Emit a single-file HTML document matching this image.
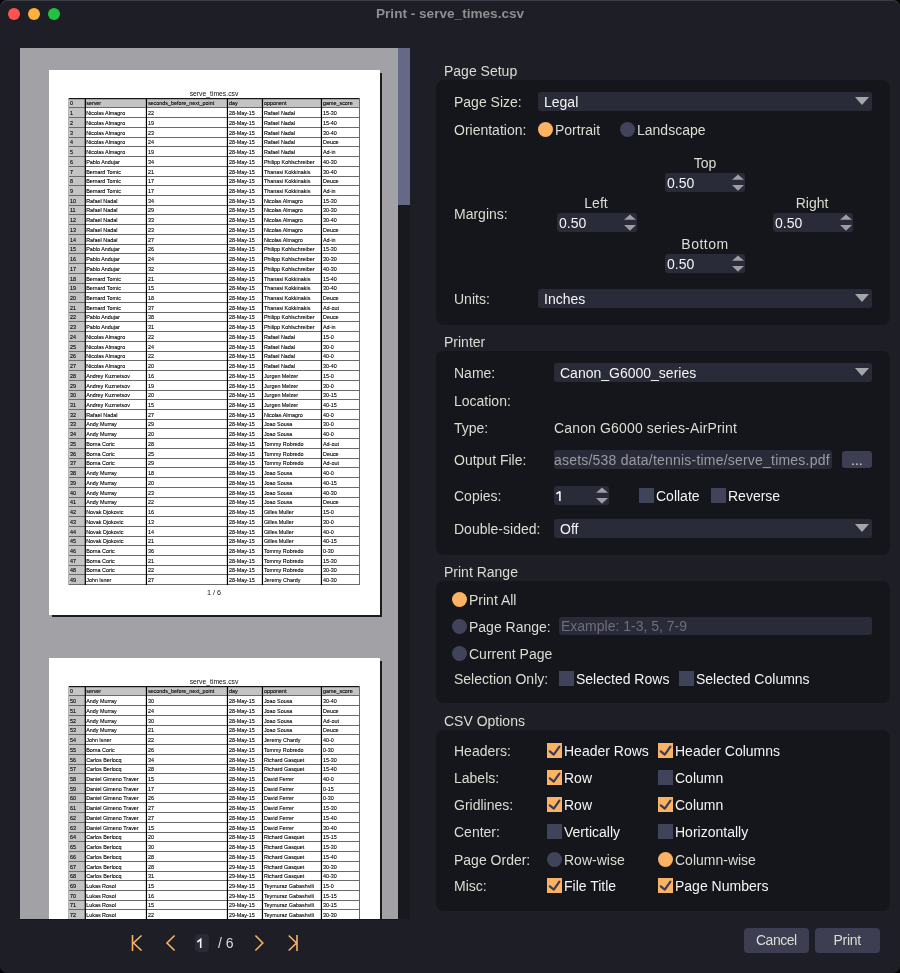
<!DOCTYPE html><html><head><meta charset="utf-8"><style>
html,body{margin:0;padding:0;width:900px;height:973px;background:#000;overflow:hidden}
.win{will-change:transform;position:absolute;left:0;top:0;width:900px;height:973px;background:#1d1e26;border-radius:7px;overflow:hidden;box-shadow:inset 0 1px 0 #3c3d44}
.t{position:absolute;white-space:nowrap;font-family:"Liberation Sans", sans-serif}
.r{position:absolute}
.win *{-webkit-font-smoothing:antialiased}
.pv{position:absolute;left:20px;top:48px;width:378px;height:871px;background:#a2a1a6;overflow:hidden}
</style></head><body><div class="win">
<div class="r" style="left:8px;top:8px;width:12px;height:12px;border-radius:50%;background:#fe5352"></div>
<div class="r" style="left:28px;top:8px;width:12px;height:12px;border-radius:50%;background:#fdb13a"></div>
<div class="r" style="left:48px;top:8px;width:12px;height:12px;border-radius:50%;background:#21c244"></div>
<div class="t" style="left:376px;top:7px;font-size:13.6px;line-height:13.6px;color:#8f8f92;font-weight:bold;">Print - serve_times.csv</div>
<div class="pv">
<div class="r" style="left:-20px;top:-48px;width:900px;height:973px">
<div class="r" style="left:52px;top:73px;width:330px;height:544px;background:#1c1c1c"></div>
<div class="r" style="left:49px;top:70px;width:331px;height:545px;background:#fff"></div>
<div class="t" style="left:49px;width:330px;text-align:center;top:89.5px;font-size:6.8px;line-height:7px;color:#111">serve_times.csv</div>
<svg class="r" style="left:0;top:0" width="900" height="973"><rect x="68" y="98" width="17.400000000000006" height="487" fill="#c4c4c4"/><rect x="68" y="98" width="292" height="9" fill="#c4c4c4"/><rect x="68" y="98" width="292" height="1.2" fill="#151515"/><rect x="68" y="107" width="292" height="1" fill="#6a6a6a"/><rect x="68" y="117" width="292" height="1" fill="#6a6a6a"/><rect x="68" y="127" width="292" height="1" fill="#6a6a6a"/><rect x="68" y="137" width="292" height="1" fill="#6a6a6a"/><rect x="68" y="146" width="292" height="1" fill="#6a6a6a"/><rect x="68" y="156" width="292" height="1" fill="#6a6a6a"/><rect x="68" y="166" width="292" height="1" fill="#6a6a6a"/><rect x="68" y="176" width="292" height="1" fill="#6a6a6a"/><rect x="68" y="185" width="292" height="1" fill="#6a6a6a"/><rect x="68" y="195" width="292" height="1" fill="#6a6a6a"/><rect x="68" y="205" width="292" height="1" fill="#6a6a6a"/><rect x="68" y="214" width="292" height="1" fill="#6a6a6a"/><rect x="68" y="224" width="292" height="1" fill="#6a6a6a"/><rect x="68" y="234" width="292" height="1" fill="#6a6a6a"/><rect x="68" y="244" width="292" height="1" fill="#6a6a6a"/><rect x="68" y="253" width="292" height="1" fill="#6a6a6a"/><rect x="68" y="263" width="292" height="1" fill="#6a6a6a"/><rect x="68" y="273" width="292" height="1" fill="#6a6a6a"/><rect x="68" y="283" width="292" height="1" fill="#6a6a6a"/><rect x="68" y="292" width="292" height="1" fill="#6a6a6a"/><rect x="68" y="302" width="292" height="1" fill="#6a6a6a"/><rect x="68" y="312" width="292" height="1" fill="#6a6a6a"/><rect x="68" y="321" width="292" height="1" fill="#6a6a6a"/><rect x="68" y="331" width="292" height="1" fill="#6a6a6a"/><rect x="68" y="341" width="292" height="1" fill="#6a6a6a"/><rect x="68" y="351" width="292" height="1" fill="#6a6a6a"/><rect x="68" y="360" width="292" height="1" fill="#6a6a6a"/><rect x="68" y="370" width="292" height="1" fill="#6a6a6a"/><rect x="68" y="380" width="292" height="1" fill="#6a6a6a"/><rect x="68" y="390" width="292" height="1" fill="#6a6a6a"/><rect x="68" y="399" width="292" height="1" fill="#6a6a6a"/><rect x="68" y="409" width="292" height="1" fill="#6a6a6a"/><rect x="68" y="419" width="292" height="1" fill="#6a6a6a"/><rect x="68" y="428" width="292" height="1" fill="#6a6a6a"/><rect x="68" y="438" width="292" height="1" fill="#6a6a6a"/><rect x="68" y="448" width="292" height="1" fill="#6a6a6a"/><rect x="68" y="458" width="292" height="1" fill="#6a6a6a"/><rect x="68" y="467" width="292" height="1" fill="#6a6a6a"/><rect x="68" y="477" width="292" height="1" fill="#6a6a6a"/><rect x="68" y="487" width="292" height="1" fill="#6a6a6a"/><rect x="68" y="497" width="292" height="1" fill="#6a6a6a"/><rect x="68" y="506" width="292" height="1" fill="#6a6a6a"/><rect x="68" y="516" width="292" height="1" fill="#6a6a6a"/><rect x="68" y="526" width="292" height="1" fill="#6a6a6a"/><rect x="68" y="536" width="292" height="1" fill="#6a6a6a"/><rect x="68" y="545" width="292" height="1" fill="#6a6a6a"/><rect x="68" y="555" width="292" height="1" fill="#6a6a6a"/><rect x="68" y="565" width="292" height="1" fill="#6a6a6a"/><rect x="68" y="574" width="292" height="1" fill="#6a6a6a"/><rect x="68" y="584" width="292" height="1" fill="#6a6a6a"/><rect x="68" y="98" width="1" height="487" fill="#b4b4b4"/><rect x="359" y="98" width="1" height="487" fill="#6a6a6a"/><rect x="84.70" y="98" width="1.2" height="487" fill="#000"/><rect x="145.84" y="98" width="1.2" height="487" fill="#000"/><rect x="226.84" y="98" width="1.2" height="487" fill="#000"/><rect x="261.84" y="98" width="1.2" height="487" fill="#000"/><rect x="320.84" y="98" width="1.2" height="487" fill="#000"/></svg>
<div class="t" style="left:70.00px;top:99.80px;font-size:5.4px;line-height:6px;color:#000;-webkit-text-stroke:0.1px #000">0</div>
<div class="t" style="left:86.20px;top:99.80px;font-size:5.4px;line-height:6px;color:#000;-webkit-text-stroke:0.1px #000">server</div>
<div class="t" style="left:147.90px;top:99.80px;font-size:5.4px;line-height:6px;color:#000;-webkit-text-stroke:0.1px #000">seconds_before_next_point</div>
<div class="t" style="left:228.90px;top:99.80px;font-size:5.4px;line-height:6px;color:#000;-webkit-text-stroke:0.1px #000">day</div>
<div class="t" style="left:263.90px;top:99.80px;font-size:5.4px;line-height:6px;color:#000;-webkit-text-stroke:0.1px #000">opponent</div>
<div class="t" style="left:323.00px;top:99.80px;font-size:5.4px;line-height:6px;color:#000;-webkit-text-stroke:0.1px #000">game_score</div>
<div class="t" style="left:70.00px;top:109.80px;font-size:5.4px;line-height:6px;color:#000;-webkit-text-stroke:0.1px #000">1</div>
<div class="t" style="left:86.20px;top:109.80px;font-size:5.4px;line-height:6px;color:#000;-webkit-text-stroke:0.1px #000">Nicolas Almagro</div>
<div class="t" style="left:147.90px;top:109.80px;font-size:5.4px;line-height:6px;color:#000;-webkit-text-stroke:0.1px #000">22</div>
<div class="t" style="left:228.90px;top:109.80px;font-size:5.4px;line-height:6px;color:#000;-webkit-text-stroke:0.1px #000">28-May-15</div>
<div class="t" style="left:263.90px;top:109.80px;font-size:5.4px;line-height:6px;color:#000;-webkit-text-stroke:0.1px #000">Rafael Nadal</div>
<div class="t" style="left:323.00px;top:109.80px;font-size:5.4px;line-height:6px;color:#000;-webkit-text-stroke:0.1px #000">15-30</div>
<div class="t" style="left:70.00px;top:119.80px;font-size:5.4px;line-height:6px;color:#000;-webkit-text-stroke:0.1px #000">2</div>
<div class="t" style="left:86.20px;top:119.80px;font-size:5.4px;line-height:6px;color:#000;-webkit-text-stroke:0.1px #000">Nicolas Almagro</div>
<div class="t" style="left:147.90px;top:119.80px;font-size:5.4px;line-height:6px;color:#000;-webkit-text-stroke:0.1px #000">19</div>
<div class="t" style="left:228.90px;top:119.80px;font-size:5.4px;line-height:6px;color:#000;-webkit-text-stroke:0.1px #000">28-May-15</div>
<div class="t" style="left:263.90px;top:119.80px;font-size:5.4px;line-height:6px;color:#000;-webkit-text-stroke:0.1px #000">Rafael Nadal</div>
<div class="t" style="left:323.00px;top:119.80px;font-size:5.4px;line-height:6px;color:#000;-webkit-text-stroke:0.1px #000">15-40</div>
<div class="t" style="left:70.00px;top:129.80px;font-size:5.4px;line-height:6px;color:#000;-webkit-text-stroke:0.1px #000">3</div>
<div class="t" style="left:86.20px;top:129.80px;font-size:5.4px;line-height:6px;color:#000;-webkit-text-stroke:0.1px #000">Nicolas Almagro</div>
<div class="t" style="left:147.90px;top:129.80px;font-size:5.4px;line-height:6px;color:#000;-webkit-text-stroke:0.1px #000">23</div>
<div class="t" style="left:228.90px;top:129.80px;font-size:5.4px;line-height:6px;color:#000;-webkit-text-stroke:0.1px #000">28-May-15</div>
<div class="t" style="left:263.90px;top:129.80px;font-size:5.4px;line-height:6px;color:#000;-webkit-text-stroke:0.1px #000">Rafael Nadal</div>
<div class="t" style="left:323.00px;top:129.80px;font-size:5.4px;line-height:6px;color:#000;-webkit-text-stroke:0.1px #000">30-40</div>
<div class="t" style="left:70.00px;top:138.80px;font-size:5.4px;line-height:6px;color:#000;-webkit-text-stroke:0.1px #000">4</div>
<div class="t" style="left:86.20px;top:138.80px;font-size:5.4px;line-height:6px;color:#000;-webkit-text-stroke:0.1px #000">Nicolas Almagro</div>
<div class="t" style="left:147.90px;top:138.80px;font-size:5.4px;line-height:6px;color:#000;-webkit-text-stroke:0.1px #000">24</div>
<div class="t" style="left:228.90px;top:138.80px;font-size:5.4px;line-height:6px;color:#000;-webkit-text-stroke:0.1px #000">28-May-15</div>
<div class="t" style="left:263.90px;top:138.80px;font-size:5.4px;line-height:6px;color:#000;-webkit-text-stroke:0.1px #000">Rafael Nadal</div>
<div class="t" style="left:323.00px;top:138.80px;font-size:5.4px;line-height:6px;color:#000;-webkit-text-stroke:0.1px #000">Deuce</div>
<div class="t" style="left:70.00px;top:148.80px;font-size:5.4px;line-height:6px;color:#000;-webkit-text-stroke:0.1px #000">5</div>
<div class="t" style="left:86.20px;top:148.80px;font-size:5.4px;line-height:6px;color:#000;-webkit-text-stroke:0.1px #000">Nicolas Almagro</div>
<div class="t" style="left:147.90px;top:148.80px;font-size:5.4px;line-height:6px;color:#000;-webkit-text-stroke:0.1px #000">19</div>
<div class="t" style="left:228.90px;top:148.80px;font-size:5.4px;line-height:6px;color:#000;-webkit-text-stroke:0.1px #000">28-May-15</div>
<div class="t" style="left:263.90px;top:148.80px;font-size:5.4px;line-height:6px;color:#000;-webkit-text-stroke:0.1px #000">Rafael Nadal</div>
<div class="t" style="left:323.00px;top:148.80px;font-size:5.4px;line-height:6px;color:#000;-webkit-text-stroke:0.1px #000">Ad-in</div>
<div class="t" style="left:70.00px;top:158.80px;font-size:5.4px;line-height:6px;color:#000;-webkit-text-stroke:0.1px #000">6</div>
<div class="t" style="left:86.20px;top:158.80px;font-size:5.4px;line-height:6px;color:#000;-webkit-text-stroke:0.1px #000">Pablo Andujar</div>
<div class="t" style="left:147.90px;top:158.80px;font-size:5.4px;line-height:6px;color:#000;-webkit-text-stroke:0.1px #000">34</div>
<div class="t" style="left:228.90px;top:158.80px;font-size:5.4px;line-height:6px;color:#000;-webkit-text-stroke:0.1px #000">28-May-15</div>
<div class="t" style="left:263.90px;top:158.80px;font-size:5.4px;line-height:6px;color:#000;-webkit-text-stroke:0.1px #000">Philipp Kohlschreiber</div>
<div class="t" style="left:323.00px;top:158.80px;font-size:5.4px;line-height:6px;color:#000;-webkit-text-stroke:0.1px #000">40-30</div>
<div class="t" style="left:70.00px;top:168.80px;font-size:5.4px;line-height:6px;color:#000;-webkit-text-stroke:0.1px #000">7</div>
<div class="t" style="left:86.20px;top:168.80px;font-size:5.4px;line-height:6px;color:#000;-webkit-text-stroke:0.1px #000">Bernard Tomic</div>
<div class="t" style="left:147.90px;top:168.80px;font-size:5.4px;line-height:6px;color:#000;-webkit-text-stroke:0.1px #000">21</div>
<div class="t" style="left:228.90px;top:168.80px;font-size:5.4px;line-height:6px;color:#000;-webkit-text-stroke:0.1px #000">28-May-15</div>
<div class="t" style="left:263.90px;top:168.80px;font-size:5.4px;line-height:6px;color:#000;-webkit-text-stroke:0.1px #000">Thanasi Kokkinakis</div>
<div class="t" style="left:323.00px;top:168.80px;font-size:5.4px;line-height:6px;color:#000;-webkit-text-stroke:0.1px #000">30-40</div>
<div class="t" style="left:70.00px;top:177.80px;font-size:5.4px;line-height:6px;color:#000;-webkit-text-stroke:0.1px #000">8</div>
<div class="t" style="left:86.20px;top:177.80px;font-size:5.4px;line-height:6px;color:#000;-webkit-text-stroke:0.1px #000">Bernard Tomic</div>
<div class="t" style="left:147.90px;top:177.80px;font-size:5.4px;line-height:6px;color:#000;-webkit-text-stroke:0.1px #000">17</div>
<div class="t" style="left:228.90px;top:177.80px;font-size:5.4px;line-height:6px;color:#000;-webkit-text-stroke:0.1px #000">28-May-15</div>
<div class="t" style="left:263.90px;top:177.80px;font-size:5.4px;line-height:6px;color:#000;-webkit-text-stroke:0.1px #000">Thanasi Kokkinakis</div>
<div class="t" style="left:323.00px;top:177.80px;font-size:5.4px;line-height:6px;color:#000;-webkit-text-stroke:0.1px #000">Deuce</div>
<div class="t" style="left:70.00px;top:187.80px;font-size:5.4px;line-height:6px;color:#000;-webkit-text-stroke:0.1px #000">9</div>
<div class="t" style="left:86.20px;top:187.80px;font-size:5.4px;line-height:6px;color:#000;-webkit-text-stroke:0.1px #000">Bernard Tomic</div>
<div class="t" style="left:147.90px;top:187.80px;font-size:5.4px;line-height:6px;color:#000;-webkit-text-stroke:0.1px #000">17</div>
<div class="t" style="left:228.90px;top:187.80px;font-size:5.4px;line-height:6px;color:#000;-webkit-text-stroke:0.1px #000">28-May-15</div>
<div class="t" style="left:263.90px;top:187.80px;font-size:5.4px;line-height:6px;color:#000;-webkit-text-stroke:0.1px #000">Thanasi Kokkinakis</div>
<div class="t" style="left:323.00px;top:187.80px;font-size:5.4px;line-height:6px;color:#000;-webkit-text-stroke:0.1px #000">Ad-in</div>
<div class="t" style="left:70.00px;top:197.80px;font-size:5.4px;line-height:6px;color:#000;-webkit-text-stroke:0.1px #000">10</div>
<div class="t" style="left:86.20px;top:197.80px;font-size:5.4px;line-height:6px;color:#000;-webkit-text-stroke:0.1px #000">Rafael Nadal</div>
<div class="t" style="left:147.90px;top:197.80px;font-size:5.4px;line-height:6px;color:#000;-webkit-text-stroke:0.1px #000">34</div>
<div class="t" style="left:228.90px;top:197.80px;font-size:5.4px;line-height:6px;color:#000;-webkit-text-stroke:0.1px #000">28-May-15</div>
<div class="t" style="left:263.90px;top:197.80px;font-size:5.4px;line-height:6px;color:#000;-webkit-text-stroke:0.1px #000">Nicolas Almagro</div>
<div class="t" style="left:323.00px;top:197.80px;font-size:5.4px;line-height:6px;color:#000;-webkit-text-stroke:0.1px #000">15-30</div>
<div class="t" style="left:70.00px;top:206.80px;font-size:5.4px;line-height:6px;color:#000;-webkit-text-stroke:0.1px #000">11</div>
<div class="t" style="left:86.20px;top:206.80px;font-size:5.4px;line-height:6px;color:#000;-webkit-text-stroke:0.1px #000">Rafael Nadal</div>
<div class="t" style="left:147.90px;top:206.80px;font-size:5.4px;line-height:6px;color:#000;-webkit-text-stroke:0.1px #000">29</div>
<div class="t" style="left:228.90px;top:206.80px;font-size:5.4px;line-height:6px;color:#000;-webkit-text-stroke:0.1px #000">28-May-15</div>
<div class="t" style="left:263.90px;top:206.80px;font-size:5.4px;line-height:6px;color:#000;-webkit-text-stroke:0.1px #000">Nicolas Almagro</div>
<div class="t" style="left:323.00px;top:206.80px;font-size:5.4px;line-height:6px;color:#000;-webkit-text-stroke:0.1px #000">30-30</div>
<div class="t" style="left:70.00px;top:216.80px;font-size:5.4px;line-height:6px;color:#000;-webkit-text-stroke:0.1px #000">12</div>
<div class="t" style="left:86.20px;top:216.80px;font-size:5.4px;line-height:6px;color:#000;-webkit-text-stroke:0.1px #000">Rafael Nadal</div>
<div class="t" style="left:147.90px;top:216.80px;font-size:5.4px;line-height:6px;color:#000;-webkit-text-stroke:0.1px #000">33</div>
<div class="t" style="left:228.90px;top:216.80px;font-size:5.4px;line-height:6px;color:#000;-webkit-text-stroke:0.1px #000">28-May-15</div>
<div class="t" style="left:263.90px;top:216.80px;font-size:5.4px;line-height:6px;color:#000;-webkit-text-stroke:0.1px #000">Nicolas Almagro</div>
<div class="t" style="left:323.00px;top:216.80px;font-size:5.4px;line-height:6px;color:#000;-webkit-text-stroke:0.1px #000">30-40</div>
<div class="t" style="left:70.00px;top:226.80px;font-size:5.4px;line-height:6px;color:#000;-webkit-text-stroke:0.1px #000">13</div>
<div class="t" style="left:86.20px;top:226.80px;font-size:5.4px;line-height:6px;color:#000;-webkit-text-stroke:0.1px #000">Rafael Nadal</div>
<div class="t" style="left:147.90px;top:226.80px;font-size:5.4px;line-height:6px;color:#000;-webkit-text-stroke:0.1px #000">23</div>
<div class="t" style="left:228.90px;top:226.80px;font-size:5.4px;line-height:6px;color:#000;-webkit-text-stroke:0.1px #000">28-May-15</div>
<div class="t" style="left:263.90px;top:226.80px;font-size:5.4px;line-height:6px;color:#000;-webkit-text-stroke:0.1px #000">Nicolas Almagro</div>
<div class="t" style="left:323.00px;top:226.80px;font-size:5.4px;line-height:6px;color:#000;-webkit-text-stroke:0.1px #000">Deuce</div>
<div class="t" style="left:70.00px;top:236.80px;font-size:5.4px;line-height:6px;color:#000;-webkit-text-stroke:0.1px #000">14</div>
<div class="t" style="left:86.20px;top:236.80px;font-size:5.4px;line-height:6px;color:#000;-webkit-text-stroke:0.1px #000">Rafael Nadal</div>
<div class="t" style="left:147.90px;top:236.80px;font-size:5.4px;line-height:6px;color:#000;-webkit-text-stroke:0.1px #000">27</div>
<div class="t" style="left:228.90px;top:236.80px;font-size:5.4px;line-height:6px;color:#000;-webkit-text-stroke:0.1px #000">28-May-15</div>
<div class="t" style="left:263.90px;top:236.80px;font-size:5.4px;line-height:6px;color:#000;-webkit-text-stroke:0.1px #000">Nicolas Almagro</div>
<div class="t" style="left:323.00px;top:236.80px;font-size:5.4px;line-height:6px;color:#000;-webkit-text-stroke:0.1px #000">Ad-in</div>
<div class="t" style="left:70.00px;top:245.80px;font-size:5.4px;line-height:6px;color:#000;-webkit-text-stroke:0.1px #000">15</div>
<div class="t" style="left:86.20px;top:245.80px;font-size:5.4px;line-height:6px;color:#000;-webkit-text-stroke:0.1px #000">Pablo Andujar</div>
<div class="t" style="left:147.90px;top:245.80px;font-size:5.4px;line-height:6px;color:#000;-webkit-text-stroke:0.1px #000">26</div>
<div class="t" style="left:228.90px;top:245.80px;font-size:5.4px;line-height:6px;color:#000;-webkit-text-stroke:0.1px #000">28-May-15</div>
<div class="t" style="left:263.90px;top:245.80px;font-size:5.4px;line-height:6px;color:#000;-webkit-text-stroke:0.1px #000">Philipp Kohlschreiber</div>
<div class="t" style="left:323.00px;top:245.80px;font-size:5.4px;line-height:6px;color:#000;-webkit-text-stroke:0.1px #000">15-30</div>
<div class="t" style="left:70.00px;top:255.80px;font-size:5.4px;line-height:6px;color:#000;-webkit-text-stroke:0.1px #000">16</div>
<div class="t" style="left:86.20px;top:255.80px;font-size:5.4px;line-height:6px;color:#000;-webkit-text-stroke:0.1px #000">Pablo Andujar</div>
<div class="t" style="left:147.90px;top:255.80px;font-size:5.4px;line-height:6px;color:#000;-webkit-text-stroke:0.1px #000">24</div>
<div class="t" style="left:228.90px;top:255.80px;font-size:5.4px;line-height:6px;color:#000;-webkit-text-stroke:0.1px #000">28-May-15</div>
<div class="t" style="left:263.90px;top:255.80px;font-size:5.4px;line-height:6px;color:#000;-webkit-text-stroke:0.1px #000">Philipp Kohlschreiber</div>
<div class="t" style="left:323.00px;top:255.80px;font-size:5.4px;line-height:6px;color:#000;-webkit-text-stroke:0.1px #000">30-30</div>
<div class="t" style="left:70.00px;top:265.80px;font-size:5.4px;line-height:6px;color:#000;-webkit-text-stroke:0.1px #000">17</div>
<div class="t" style="left:86.20px;top:265.80px;font-size:5.4px;line-height:6px;color:#000;-webkit-text-stroke:0.1px #000">Pablo Andujar</div>
<div class="t" style="left:147.90px;top:265.80px;font-size:5.4px;line-height:6px;color:#000;-webkit-text-stroke:0.1px #000">32</div>
<div class="t" style="left:228.90px;top:265.80px;font-size:5.4px;line-height:6px;color:#000;-webkit-text-stroke:0.1px #000">28-May-15</div>
<div class="t" style="left:263.90px;top:265.80px;font-size:5.4px;line-height:6px;color:#000;-webkit-text-stroke:0.1px #000">Philipp Kohlschreiber</div>
<div class="t" style="left:323.00px;top:265.80px;font-size:5.4px;line-height:6px;color:#000;-webkit-text-stroke:0.1px #000">40-30</div>
<div class="t" style="left:70.00px;top:275.80px;font-size:5.4px;line-height:6px;color:#000;-webkit-text-stroke:0.1px #000">18</div>
<div class="t" style="left:86.20px;top:275.80px;font-size:5.4px;line-height:6px;color:#000;-webkit-text-stroke:0.1px #000">Bernard Tomic</div>
<div class="t" style="left:147.90px;top:275.80px;font-size:5.4px;line-height:6px;color:#000;-webkit-text-stroke:0.1px #000">21</div>
<div class="t" style="left:228.90px;top:275.80px;font-size:5.4px;line-height:6px;color:#000;-webkit-text-stroke:0.1px #000">28-May-15</div>
<div class="t" style="left:263.90px;top:275.80px;font-size:5.4px;line-height:6px;color:#000;-webkit-text-stroke:0.1px #000">Thanasi Kokkinakis</div>
<div class="t" style="left:323.00px;top:275.80px;font-size:5.4px;line-height:6px;color:#000;-webkit-text-stroke:0.1px #000">15-40</div>
<div class="t" style="left:70.00px;top:284.80px;font-size:5.4px;line-height:6px;color:#000;-webkit-text-stroke:0.1px #000">19</div>
<div class="t" style="left:86.20px;top:284.80px;font-size:5.4px;line-height:6px;color:#000;-webkit-text-stroke:0.1px #000">Bernard Tomic</div>
<div class="t" style="left:147.90px;top:284.80px;font-size:5.4px;line-height:6px;color:#000;-webkit-text-stroke:0.1px #000">15</div>
<div class="t" style="left:228.90px;top:284.80px;font-size:5.4px;line-height:6px;color:#000;-webkit-text-stroke:0.1px #000">28-May-15</div>
<div class="t" style="left:263.90px;top:284.80px;font-size:5.4px;line-height:6px;color:#000;-webkit-text-stroke:0.1px #000">Thanasi Kokkinakis</div>
<div class="t" style="left:323.00px;top:284.80px;font-size:5.4px;line-height:6px;color:#000;-webkit-text-stroke:0.1px #000">30-40</div>
<div class="t" style="left:70.00px;top:294.80px;font-size:5.4px;line-height:6px;color:#000;-webkit-text-stroke:0.1px #000">20</div>
<div class="t" style="left:86.20px;top:294.80px;font-size:5.4px;line-height:6px;color:#000;-webkit-text-stroke:0.1px #000">Bernard Tomic</div>
<div class="t" style="left:147.90px;top:294.80px;font-size:5.4px;line-height:6px;color:#000;-webkit-text-stroke:0.1px #000">18</div>
<div class="t" style="left:228.90px;top:294.80px;font-size:5.4px;line-height:6px;color:#000;-webkit-text-stroke:0.1px #000">28-May-15</div>
<div class="t" style="left:263.90px;top:294.80px;font-size:5.4px;line-height:6px;color:#000;-webkit-text-stroke:0.1px #000">Thanasi Kokkinakis</div>
<div class="t" style="left:323.00px;top:294.80px;font-size:5.4px;line-height:6px;color:#000;-webkit-text-stroke:0.1px #000">Deuce</div>
<div class="t" style="left:70.00px;top:304.80px;font-size:5.4px;line-height:6px;color:#000;-webkit-text-stroke:0.1px #000">21</div>
<div class="t" style="left:86.20px;top:304.80px;font-size:5.4px;line-height:6px;color:#000;-webkit-text-stroke:0.1px #000">Bernard Tomic</div>
<div class="t" style="left:147.90px;top:304.80px;font-size:5.4px;line-height:6px;color:#000;-webkit-text-stroke:0.1px #000">37</div>
<div class="t" style="left:228.90px;top:304.80px;font-size:5.4px;line-height:6px;color:#000;-webkit-text-stroke:0.1px #000">28-May-15</div>
<div class="t" style="left:263.90px;top:304.80px;font-size:5.4px;line-height:6px;color:#000;-webkit-text-stroke:0.1px #000">Thanasi Kokkinakis</div>
<div class="t" style="left:323.00px;top:304.80px;font-size:5.4px;line-height:6px;color:#000;-webkit-text-stroke:0.1px #000">Ad-out</div>
<div class="t" style="left:70.00px;top:313.80px;font-size:5.4px;line-height:6px;color:#000;-webkit-text-stroke:0.1px #000">22</div>
<div class="t" style="left:86.20px;top:313.80px;font-size:5.4px;line-height:6px;color:#000;-webkit-text-stroke:0.1px #000">Pablo Andujar</div>
<div class="t" style="left:147.90px;top:313.80px;font-size:5.4px;line-height:6px;color:#000;-webkit-text-stroke:0.1px #000">38</div>
<div class="t" style="left:228.90px;top:313.80px;font-size:5.4px;line-height:6px;color:#000;-webkit-text-stroke:0.1px #000">28-May-15</div>
<div class="t" style="left:263.90px;top:313.80px;font-size:5.4px;line-height:6px;color:#000;-webkit-text-stroke:0.1px #000">Philipp Kohlschreiber</div>
<div class="t" style="left:323.00px;top:313.80px;font-size:5.4px;line-height:6px;color:#000;-webkit-text-stroke:0.1px #000">Deuce</div>
<div class="t" style="left:70.00px;top:323.80px;font-size:5.4px;line-height:6px;color:#000;-webkit-text-stroke:0.1px #000">23</div>
<div class="t" style="left:86.20px;top:323.80px;font-size:5.4px;line-height:6px;color:#000;-webkit-text-stroke:0.1px #000">Pablo Andujar</div>
<div class="t" style="left:147.90px;top:323.80px;font-size:5.4px;line-height:6px;color:#000;-webkit-text-stroke:0.1px #000">31</div>
<div class="t" style="left:228.90px;top:323.80px;font-size:5.4px;line-height:6px;color:#000;-webkit-text-stroke:0.1px #000">28-May-15</div>
<div class="t" style="left:263.90px;top:323.80px;font-size:5.4px;line-height:6px;color:#000;-webkit-text-stroke:0.1px #000">Philipp Kohlschreiber</div>
<div class="t" style="left:323.00px;top:323.80px;font-size:5.4px;line-height:6px;color:#000;-webkit-text-stroke:0.1px #000">Ad-in</div>
<div class="t" style="left:70.00px;top:333.80px;font-size:5.4px;line-height:6px;color:#000;-webkit-text-stroke:0.1px #000">24</div>
<div class="t" style="left:86.20px;top:333.80px;font-size:5.4px;line-height:6px;color:#000;-webkit-text-stroke:0.1px #000">Nicolas Almagro</div>
<div class="t" style="left:147.90px;top:333.80px;font-size:5.4px;line-height:6px;color:#000;-webkit-text-stroke:0.1px #000">22</div>
<div class="t" style="left:228.90px;top:333.80px;font-size:5.4px;line-height:6px;color:#000;-webkit-text-stroke:0.1px #000">28-May-15</div>
<div class="t" style="left:263.90px;top:333.80px;font-size:5.4px;line-height:6px;color:#000;-webkit-text-stroke:0.1px #000">Rafael Nadal</div>
<div class="t" style="left:323.00px;top:333.80px;font-size:5.4px;line-height:6px;color:#000;-webkit-text-stroke:0.1px #000">15-0</div>
<div class="t" style="left:70.00px;top:343.80px;font-size:5.4px;line-height:6px;color:#000;-webkit-text-stroke:0.1px #000">25</div>
<div class="t" style="left:86.20px;top:343.80px;font-size:5.4px;line-height:6px;color:#000;-webkit-text-stroke:0.1px #000">Nicolas Almagro</div>
<div class="t" style="left:147.90px;top:343.80px;font-size:5.4px;line-height:6px;color:#000;-webkit-text-stroke:0.1px #000">24</div>
<div class="t" style="left:228.90px;top:343.80px;font-size:5.4px;line-height:6px;color:#000;-webkit-text-stroke:0.1px #000">28-May-15</div>
<div class="t" style="left:263.90px;top:343.80px;font-size:5.4px;line-height:6px;color:#000;-webkit-text-stroke:0.1px #000">Rafael Nadal</div>
<div class="t" style="left:323.00px;top:343.80px;font-size:5.4px;line-height:6px;color:#000;-webkit-text-stroke:0.1px #000">30-0</div>
<div class="t" style="left:70.00px;top:352.80px;font-size:5.4px;line-height:6px;color:#000;-webkit-text-stroke:0.1px #000">26</div>
<div class="t" style="left:86.20px;top:352.80px;font-size:5.4px;line-height:6px;color:#000;-webkit-text-stroke:0.1px #000">Nicolas Almagro</div>
<div class="t" style="left:147.90px;top:352.80px;font-size:5.4px;line-height:6px;color:#000;-webkit-text-stroke:0.1px #000">22</div>
<div class="t" style="left:228.90px;top:352.80px;font-size:5.4px;line-height:6px;color:#000;-webkit-text-stroke:0.1px #000">28-May-15</div>
<div class="t" style="left:263.90px;top:352.80px;font-size:5.4px;line-height:6px;color:#000;-webkit-text-stroke:0.1px #000">Rafael Nadal</div>
<div class="t" style="left:323.00px;top:352.80px;font-size:5.4px;line-height:6px;color:#000;-webkit-text-stroke:0.1px #000">40-0</div>
<div class="t" style="left:70.00px;top:362.80px;font-size:5.4px;line-height:6px;color:#000;-webkit-text-stroke:0.1px #000">27</div>
<div class="t" style="left:86.20px;top:362.80px;font-size:5.4px;line-height:6px;color:#000;-webkit-text-stroke:0.1px #000">Nicolas Almagro</div>
<div class="t" style="left:147.90px;top:362.80px;font-size:5.4px;line-height:6px;color:#000;-webkit-text-stroke:0.1px #000">20</div>
<div class="t" style="left:228.90px;top:362.80px;font-size:5.4px;line-height:6px;color:#000;-webkit-text-stroke:0.1px #000">28-May-15</div>
<div class="t" style="left:263.90px;top:362.80px;font-size:5.4px;line-height:6px;color:#000;-webkit-text-stroke:0.1px #000">Rafael Nadal</div>
<div class="t" style="left:323.00px;top:362.80px;font-size:5.4px;line-height:6px;color:#000;-webkit-text-stroke:0.1px #000">30-40</div>
<div class="t" style="left:70.00px;top:372.80px;font-size:5.4px;line-height:6px;color:#000;-webkit-text-stroke:0.1px #000">28</div>
<div class="t" style="left:86.20px;top:372.80px;font-size:5.4px;line-height:6px;color:#000;-webkit-text-stroke:0.1px #000">Andrey Kuznetsov</div>
<div class="t" style="left:147.90px;top:372.80px;font-size:5.4px;line-height:6px;color:#000;-webkit-text-stroke:0.1px #000">16</div>
<div class="t" style="left:228.90px;top:372.80px;font-size:5.4px;line-height:6px;color:#000;-webkit-text-stroke:0.1px #000">28-May-15</div>
<div class="t" style="left:263.90px;top:372.80px;font-size:5.4px;line-height:6px;color:#000;-webkit-text-stroke:0.1px #000">Jurgen Melzer</div>
<div class="t" style="left:323.00px;top:372.80px;font-size:5.4px;line-height:6px;color:#000;-webkit-text-stroke:0.1px #000">15-0</div>
<div class="t" style="left:70.00px;top:382.80px;font-size:5.4px;line-height:6px;color:#000;-webkit-text-stroke:0.1px #000">29</div>
<div class="t" style="left:86.20px;top:382.80px;font-size:5.4px;line-height:6px;color:#000;-webkit-text-stroke:0.1px #000">Andrey Kuznetsov</div>
<div class="t" style="left:147.90px;top:382.80px;font-size:5.4px;line-height:6px;color:#000;-webkit-text-stroke:0.1px #000">19</div>
<div class="t" style="left:228.90px;top:382.80px;font-size:5.4px;line-height:6px;color:#000;-webkit-text-stroke:0.1px #000">28-May-15</div>
<div class="t" style="left:263.90px;top:382.80px;font-size:5.4px;line-height:6px;color:#000;-webkit-text-stroke:0.1px #000">Jurgen Melzer</div>
<div class="t" style="left:323.00px;top:382.80px;font-size:5.4px;line-height:6px;color:#000;-webkit-text-stroke:0.1px #000">30-0</div>
<div class="t" style="left:70.00px;top:391.80px;font-size:5.4px;line-height:6px;color:#000;-webkit-text-stroke:0.1px #000">30</div>
<div class="t" style="left:86.20px;top:391.80px;font-size:5.4px;line-height:6px;color:#000;-webkit-text-stroke:0.1px #000">Andrey Kuznetsov</div>
<div class="t" style="left:147.90px;top:391.80px;font-size:5.4px;line-height:6px;color:#000;-webkit-text-stroke:0.1px #000">20</div>
<div class="t" style="left:228.90px;top:391.80px;font-size:5.4px;line-height:6px;color:#000;-webkit-text-stroke:0.1px #000">28-May-15</div>
<div class="t" style="left:263.90px;top:391.80px;font-size:5.4px;line-height:6px;color:#000;-webkit-text-stroke:0.1px #000">Jurgen Melzer</div>
<div class="t" style="left:323.00px;top:391.80px;font-size:5.4px;line-height:6px;color:#000;-webkit-text-stroke:0.1px #000">30-15</div>
<div class="t" style="left:70.00px;top:401.80px;font-size:5.4px;line-height:6px;color:#000;-webkit-text-stroke:0.1px #000">31</div>
<div class="t" style="left:86.20px;top:401.80px;font-size:5.4px;line-height:6px;color:#000;-webkit-text-stroke:0.1px #000">Andrey Kuznetsov</div>
<div class="t" style="left:147.90px;top:401.80px;font-size:5.4px;line-height:6px;color:#000;-webkit-text-stroke:0.1px #000">15</div>
<div class="t" style="left:228.90px;top:401.80px;font-size:5.4px;line-height:6px;color:#000;-webkit-text-stroke:0.1px #000">28-May-15</div>
<div class="t" style="left:263.90px;top:401.80px;font-size:5.4px;line-height:6px;color:#000;-webkit-text-stroke:0.1px #000">Jurgen Melzer</div>
<div class="t" style="left:323.00px;top:401.80px;font-size:5.4px;line-height:6px;color:#000;-webkit-text-stroke:0.1px #000">40-15</div>
<div class="t" style="left:70.00px;top:411.80px;font-size:5.4px;line-height:6px;color:#000;-webkit-text-stroke:0.1px #000">32</div>
<div class="t" style="left:86.20px;top:411.80px;font-size:5.4px;line-height:6px;color:#000;-webkit-text-stroke:0.1px #000">Rafael Nadal</div>
<div class="t" style="left:147.90px;top:411.80px;font-size:5.4px;line-height:6px;color:#000;-webkit-text-stroke:0.1px #000">27</div>
<div class="t" style="left:228.90px;top:411.80px;font-size:5.4px;line-height:6px;color:#000;-webkit-text-stroke:0.1px #000">28-May-15</div>
<div class="t" style="left:263.90px;top:411.80px;font-size:5.4px;line-height:6px;color:#000;-webkit-text-stroke:0.1px #000">Nicolas Almagro</div>
<div class="t" style="left:323.00px;top:411.80px;font-size:5.4px;line-height:6px;color:#000;-webkit-text-stroke:0.1px #000">40-0</div>
<div class="t" style="left:70.00px;top:420.80px;font-size:5.4px;line-height:6px;color:#000;-webkit-text-stroke:0.1px #000">33</div>
<div class="t" style="left:86.20px;top:420.80px;font-size:5.4px;line-height:6px;color:#000;-webkit-text-stroke:0.1px #000">Andy Murray</div>
<div class="t" style="left:147.90px;top:420.80px;font-size:5.4px;line-height:6px;color:#000;-webkit-text-stroke:0.1px #000">29</div>
<div class="t" style="left:228.90px;top:420.80px;font-size:5.4px;line-height:6px;color:#000;-webkit-text-stroke:0.1px #000">28-May-15</div>
<div class="t" style="left:263.90px;top:420.80px;font-size:5.4px;line-height:6px;color:#000;-webkit-text-stroke:0.1px #000">Joao Sousa</div>
<div class="t" style="left:323.00px;top:420.80px;font-size:5.4px;line-height:6px;color:#000;-webkit-text-stroke:0.1px #000">30-0</div>
<div class="t" style="left:70.00px;top:430.80px;font-size:5.4px;line-height:6px;color:#000;-webkit-text-stroke:0.1px #000">34</div>
<div class="t" style="left:86.20px;top:430.80px;font-size:5.4px;line-height:6px;color:#000;-webkit-text-stroke:0.1px #000">Andy Murray</div>
<div class="t" style="left:147.90px;top:430.80px;font-size:5.4px;line-height:6px;color:#000;-webkit-text-stroke:0.1px #000">20</div>
<div class="t" style="left:228.90px;top:430.80px;font-size:5.4px;line-height:6px;color:#000;-webkit-text-stroke:0.1px #000">28-May-15</div>
<div class="t" style="left:263.90px;top:430.80px;font-size:5.4px;line-height:6px;color:#000;-webkit-text-stroke:0.1px #000">Joao Sousa</div>
<div class="t" style="left:323.00px;top:430.80px;font-size:5.4px;line-height:6px;color:#000;-webkit-text-stroke:0.1px #000">40-0</div>
<div class="t" style="left:70.00px;top:440.80px;font-size:5.4px;line-height:6px;color:#000;-webkit-text-stroke:0.1px #000">35</div>
<div class="t" style="left:86.20px;top:440.80px;font-size:5.4px;line-height:6px;color:#000;-webkit-text-stroke:0.1px #000">Borna Coric</div>
<div class="t" style="left:147.90px;top:440.80px;font-size:5.4px;line-height:6px;color:#000;-webkit-text-stroke:0.1px #000">28</div>
<div class="t" style="left:228.90px;top:440.80px;font-size:5.4px;line-height:6px;color:#000;-webkit-text-stroke:0.1px #000">28-May-15</div>
<div class="t" style="left:263.90px;top:440.80px;font-size:5.4px;line-height:6px;color:#000;-webkit-text-stroke:0.1px #000">Tommy Robredo</div>
<div class="t" style="left:323.00px;top:440.80px;font-size:5.4px;line-height:6px;color:#000;-webkit-text-stroke:0.1px #000">Ad-out</div>
<div class="t" style="left:70.00px;top:450.80px;font-size:5.4px;line-height:6px;color:#000;-webkit-text-stroke:0.1px #000">36</div>
<div class="t" style="left:86.20px;top:450.80px;font-size:5.4px;line-height:6px;color:#000;-webkit-text-stroke:0.1px #000">Borna Coric</div>
<div class="t" style="left:147.90px;top:450.80px;font-size:5.4px;line-height:6px;color:#000;-webkit-text-stroke:0.1px #000">25</div>
<div class="t" style="left:228.90px;top:450.80px;font-size:5.4px;line-height:6px;color:#000;-webkit-text-stroke:0.1px #000">28-May-15</div>
<div class="t" style="left:263.90px;top:450.80px;font-size:5.4px;line-height:6px;color:#000;-webkit-text-stroke:0.1px #000">Tommy Robredo</div>
<div class="t" style="left:323.00px;top:450.80px;font-size:5.4px;line-height:6px;color:#000;-webkit-text-stroke:0.1px #000">Deuce</div>
<div class="t" style="left:70.00px;top:459.80px;font-size:5.4px;line-height:6px;color:#000;-webkit-text-stroke:0.1px #000">37</div>
<div class="t" style="left:86.20px;top:459.80px;font-size:5.4px;line-height:6px;color:#000;-webkit-text-stroke:0.1px #000">Borna Coric</div>
<div class="t" style="left:147.90px;top:459.80px;font-size:5.4px;line-height:6px;color:#000;-webkit-text-stroke:0.1px #000">29</div>
<div class="t" style="left:228.90px;top:459.80px;font-size:5.4px;line-height:6px;color:#000;-webkit-text-stroke:0.1px #000">28-May-15</div>
<div class="t" style="left:263.90px;top:459.80px;font-size:5.4px;line-height:6px;color:#000;-webkit-text-stroke:0.1px #000">Tommy Robredo</div>
<div class="t" style="left:323.00px;top:459.80px;font-size:5.4px;line-height:6px;color:#000;-webkit-text-stroke:0.1px #000">Ad-out</div>
<div class="t" style="left:70.00px;top:469.80px;font-size:5.4px;line-height:6px;color:#000;-webkit-text-stroke:0.1px #000">38</div>
<div class="t" style="left:86.20px;top:469.80px;font-size:5.4px;line-height:6px;color:#000;-webkit-text-stroke:0.1px #000">Andy Murray</div>
<div class="t" style="left:147.90px;top:469.80px;font-size:5.4px;line-height:6px;color:#000;-webkit-text-stroke:0.1px #000">18</div>
<div class="t" style="left:228.90px;top:469.80px;font-size:5.4px;line-height:6px;color:#000;-webkit-text-stroke:0.1px #000">28-May-15</div>
<div class="t" style="left:263.90px;top:469.80px;font-size:5.4px;line-height:6px;color:#000;-webkit-text-stroke:0.1px #000">Joao Sousa</div>
<div class="t" style="left:323.00px;top:469.80px;font-size:5.4px;line-height:6px;color:#000;-webkit-text-stroke:0.1px #000">40-0</div>
<div class="t" style="left:70.00px;top:479.80px;font-size:5.4px;line-height:6px;color:#000;-webkit-text-stroke:0.1px #000">39</div>
<div class="t" style="left:86.20px;top:479.80px;font-size:5.4px;line-height:6px;color:#000;-webkit-text-stroke:0.1px #000">Andy Murray</div>
<div class="t" style="left:147.90px;top:479.80px;font-size:5.4px;line-height:6px;color:#000;-webkit-text-stroke:0.1px #000">20</div>
<div class="t" style="left:228.90px;top:479.80px;font-size:5.4px;line-height:6px;color:#000;-webkit-text-stroke:0.1px #000">28-May-15</div>
<div class="t" style="left:263.90px;top:479.80px;font-size:5.4px;line-height:6px;color:#000;-webkit-text-stroke:0.1px #000">Joao Sousa</div>
<div class="t" style="left:323.00px;top:479.80px;font-size:5.4px;line-height:6px;color:#000;-webkit-text-stroke:0.1px #000">40-15</div>
<div class="t" style="left:70.00px;top:489.80px;font-size:5.4px;line-height:6px;color:#000;-webkit-text-stroke:0.1px #000">40</div>
<div class="t" style="left:86.20px;top:489.80px;font-size:5.4px;line-height:6px;color:#000;-webkit-text-stroke:0.1px #000">Andy Murray</div>
<div class="t" style="left:147.90px;top:489.80px;font-size:5.4px;line-height:6px;color:#000;-webkit-text-stroke:0.1px #000">23</div>
<div class="t" style="left:228.90px;top:489.80px;font-size:5.4px;line-height:6px;color:#000;-webkit-text-stroke:0.1px #000">28-May-15</div>
<div class="t" style="left:263.90px;top:489.80px;font-size:5.4px;line-height:6px;color:#000;-webkit-text-stroke:0.1px #000">Joao Sousa</div>
<div class="t" style="left:323.00px;top:489.80px;font-size:5.4px;line-height:6px;color:#000;-webkit-text-stroke:0.1px #000">40-30</div>
<div class="t" style="left:70.00px;top:498.80px;font-size:5.4px;line-height:6px;color:#000;-webkit-text-stroke:0.1px #000">41</div>
<div class="t" style="left:86.20px;top:498.80px;font-size:5.4px;line-height:6px;color:#000;-webkit-text-stroke:0.1px #000">Andy Murray</div>
<div class="t" style="left:147.90px;top:498.80px;font-size:5.4px;line-height:6px;color:#000;-webkit-text-stroke:0.1px #000">22</div>
<div class="t" style="left:228.90px;top:498.80px;font-size:5.4px;line-height:6px;color:#000;-webkit-text-stroke:0.1px #000">28-May-15</div>
<div class="t" style="left:263.90px;top:498.80px;font-size:5.4px;line-height:6px;color:#000;-webkit-text-stroke:0.1px #000">Joao Sousa</div>
<div class="t" style="left:323.00px;top:498.80px;font-size:5.4px;line-height:6px;color:#000;-webkit-text-stroke:0.1px #000">Deuce</div>
<div class="t" style="left:70.00px;top:508.80px;font-size:5.4px;line-height:6px;color:#000;-webkit-text-stroke:0.1px #000">42</div>
<div class="t" style="left:86.20px;top:508.80px;font-size:5.4px;line-height:6px;color:#000;-webkit-text-stroke:0.1px #000">Novak Djokovic</div>
<div class="t" style="left:147.90px;top:508.80px;font-size:5.4px;line-height:6px;color:#000;-webkit-text-stroke:0.1px #000">16</div>
<div class="t" style="left:228.90px;top:508.80px;font-size:5.4px;line-height:6px;color:#000;-webkit-text-stroke:0.1px #000">28-May-15</div>
<div class="t" style="left:263.90px;top:508.80px;font-size:5.4px;line-height:6px;color:#000;-webkit-text-stroke:0.1px #000">Gilles Muller</div>
<div class="t" style="left:323.00px;top:508.80px;font-size:5.4px;line-height:6px;color:#000;-webkit-text-stroke:0.1px #000">15-0</div>
<div class="t" style="left:70.00px;top:518.80px;font-size:5.4px;line-height:6px;color:#000;-webkit-text-stroke:0.1px #000">43</div>
<div class="t" style="left:86.20px;top:518.80px;font-size:5.4px;line-height:6px;color:#000;-webkit-text-stroke:0.1px #000">Novak Djokovic</div>
<div class="t" style="left:147.90px;top:518.80px;font-size:5.4px;line-height:6px;color:#000;-webkit-text-stroke:0.1px #000">13</div>
<div class="t" style="left:228.90px;top:518.80px;font-size:5.4px;line-height:6px;color:#000;-webkit-text-stroke:0.1px #000">28-May-15</div>
<div class="t" style="left:263.90px;top:518.80px;font-size:5.4px;line-height:6px;color:#000;-webkit-text-stroke:0.1px #000">Gilles Muller</div>
<div class="t" style="left:323.00px;top:518.80px;font-size:5.4px;line-height:6px;color:#000;-webkit-text-stroke:0.1px #000">30-0</div>
<div class="t" style="left:70.00px;top:528.80px;font-size:5.4px;line-height:6px;color:#000;-webkit-text-stroke:0.1px #000">44</div>
<div class="t" style="left:86.20px;top:528.80px;font-size:5.4px;line-height:6px;color:#000;-webkit-text-stroke:0.1px #000">Novak Djokovic</div>
<div class="t" style="left:147.90px;top:528.80px;font-size:5.4px;line-height:6px;color:#000;-webkit-text-stroke:0.1px #000">14</div>
<div class="t" style="left:228.90px;top:528.80px;font-size:5.4px;line-height:6px;color:#000;-webkit-text-stroke:0.1px #000">28-May-15</div>
<div class="t" style="left:263.90px;top:528.80px;font-size:5.4px;line-height:6px;color:#000;-webkit-text-stroke:0.1px #000">Gilles Muller</div>
<div class="t" style="left:323.00px;top:528.80px;font-size:5.4px;line-height:6px;color:#000;-webkit-text-stroke:0.1px #000">40-0</div>
<div class="t" style="left:70.00px;top:537.80px;font-size:5.4px;line-height:6px;color:#000;-webkit-text-stroke:0.1px #000">45</div>
<div class="t" style="left:86.20px;top:537.80px;font-size:5.4px;line-height:6px;color:#000;-webkit-text-stroke:0.1px #000">Novak Djokovic</div>
<div class="t" style="left:147.90px;top:537.80px;font-size:5.4px;line-height:6px;color:#000;-webkit-text-stroke:0.1px #000">21</div>
<div class="t" style="left:228.90px;top:537.80px;font-size:5.4px;line-height:6px;color:#000;-webkit-text-stroke:0.1px #000">28-May-15</div>
<div class="t" style="left:263.90px;top:537.80px;font-size:5.4px;line-height:6px;color:#000;-webkit-text-stroke:0.1px #000">Gilles Muller</div>
<div class="t" style="left:323.00px;top:537.80px;font-size:5.4px;line-height:6px;color:#000;-webkit-text-stroke:0.1px #000">40-15</div>
<div class="t" style="left:70.00px;top:547.80px;font-size:5.4px;line-height:6px;color:#000;-webkit-text-stroke:0.1px #000">46</div>
<div class="t" style="left:86.20px;top:547.80px;font-size:5.4px;line-height:6px;color:#000;-webkit-text-stroke:0.1px #000">Borna Coric</div>
<div class="t" style="left:147.90px;top:547.80px;font-size:5.4px;line-height:6px;color:#000;-webkit-text-stroke:0.1px #000">36</div>
<div class="t" style="left:228.90px;top:547.80px;font-size:5.4px;line-height:6px;color:#000;-webkit-text-stroke:0.1px #000">28-May-15</div>
<div class="t" style="left:263.90px;top:547.80px;font-size:5.4px;line-height:6px;color:#000;-webkit-text-stroke:0.1px #000">Tommy Robredo</div>
<div class="t" style="left:323.00px;top:547.80px;font-size:5.4px;line-height:6px;color:#000;-webkit-text-stroke:0.1px #000">0-30</div>
<div class="t" style="left:70.00px;top:557.80px;font-size:5.4px;line-height:6px;color:#000;-webkit-text-stroke:0.1px #000">47</div>
<div class="t" style="left:86.20px;top:557.80px;font-size:5.4px;line-height:6px;color:#000;-webkit-text-stroke:0.1px #000">Borna Coric</div>
<div class="t" style="left:147.90px;top:557.80px;font-size:5.4px;line-height:6px;color:#000;-webkit-text-stroke:0.1px #000">21</div>
<div class="t" style="left:228.90px;top:557.80px;font-size:5.4px;line-height:6px;color:#000;-webkit-text-stroke:0.1px #000">28-May-15</div>
<div class="t" style="left:263.90px;top:557.80px;font-size:5.4px;line-height:6px;color:#000;-webkit-text-stroke:0.1px #000">Tommy Robredo</div>
<div class="t" style="left:323.00px;top:557.80px;font-size:5.4px;line-height:6px;color:#000;-webkit-text-stroke:0.1px #000">15-30</div>
<div class="t" style="left:70.00px;top:566.80px;font-size:5.4px;line-height:6px;color:#000;-webkit-text-stroke:0.1px #000">48</div>
<div class="t" style="left:86.20px;top:566.80px;font-size:5.4px;line-height:6px;color:#000;-webkit-text-stroke:0.1px #000">Borna Coric</div>
<div class="t" style="left:147.90px;top:566.80px;font-size:5.4px;line-height:6px;color:#000;-webkit-text-stroke:0.1px #000">22</div>
<div class="t" style="left:228.90px;top:566.80px;font-size:5.4px;line-height:6px;color:#000;-webkit-text-stroke:0.1px #000">28-May-15</div>
<div class="t" style="left:263.90px;top:566.80px;font-size:5.4px;line-height:6px;color:#000;-webkit-text-stroke:0.1px #000">Tommy Robredo</div>
<div class="t" style="left:323.00px;top:566.80px;font-size:5.4px;line-height:6px;color:#000;-webkit-text-stroke:0.1px #000">30-30</div>
<div class="t" style="left:70.00px;top:576.80px;font-size:5.4px;line-height:6px;color:#000;-webkit-text-stroke:0.1px #000">49</div>
<div class="t" style="left:86.20px;top:576.80px;font-size:5.4px;line-height:6px;color:#000;-webkit-text-stroke:0.1px #000">John Isner</div>
<div class="t" style="left:147.90px;top:576.80px;font-size:5.4px;line-height:6px;color:#000;-webkit-text-stroke:0.1px #000">27</div>
<div class="t" style="left:228.90px;top:576.80px;font-size:5.4px;line-height:6px;color:#000;-webkit-text-stroke:0.1px #000">28-May-15</div>
<div class="t" style="left:263.90px;top:576.80px;font-size:5.4px;line-height:6px;color:#000;-webkit-text-stroke:0.1px #000">Jeremy Chardy</div>
<div class="t" style="left:323.00px;top:576.80px;font-size:5.4px;line-height:6px;color:#000;-webkit-text-stroke:0.1px #000">40-30</div>
<div class="t" style="left:49px;width:330px;text-align:center;top:589px;font-size:7.2px;line-height:8px;color:#111">1 / 6</div>
<div class="r" style="left:52px;top:661px;width:330px;height:544px;background:#1c1c1c"></div>
<div class="r" style="left:49px;top:658px;width:331px;height:545px;background:#fff"></div>
<div class="t" style="left:49px;width:330px;text-align:center;top:677.5px;font-size:6.8px;line-height:7px;color:#111">serve_times.csv</div>
<svg class="r" style="left:0;top:0" width="900" height="973"><rect x="68" y="686" width="17.400000000000006" height="254" fill="#c4c4c4"/><rect x="68" y="686" width="292" height="9" fill="#c4c4c4"/><rect x="68" y="686" width="292" height="1.2" fill="#151515"/><rect x="68" y="695" width="292" height="1" fill="#6a6a6a"/><rect x="68" y="705" width="292" height="1" fill="#6a6a6a"/><rect x="68" y="715" width="292" height="1" fill="#6a6a6a"/><rect x="68" y="725" width="292" height="1" fill="#6a6a6a"/><rect x="68" y="734" width="292" height="1" fill="#6a6a6a"/><rect x="68" y="744" width="292" height="1" fill="#6a6a6a"/><rect x="68" y="754" width="292" height="1" fill="#6a6a6a"/><rect x="68" y="764" width="292" height="1" fill="#6a6a6a"/><rect x="68" y="773" width="292" height="1" fill="#6a6a6a"/><rect x="68" y="783" width="292" height="1" fill="#6a6a6a"/><rect x="68" y="793" width="292" height="1" fill="#6a6a6a"/><rect x="68" y="802" width="292" height="1" fill="#6a6a6a"/><rect x="68" y="812" width="292" height="1" fill="#6a6a6a"/><rect x="68" y="822" width="292" height="1" fill="#6a6a6a"/><rect x="68" y="832" width="292" height="1" fill="#6a6a6a"/><rect x="68" y="841" width="292" height="1" fill="#6a6a6a"/><rect x="68" y="851" width="292" height="1" fill="#6a6a6a"/><rect x="68" y="861" width="292" height="1" fill="#6a6a6a"/><rect x="68" y="871" width="292" height="1" fill="#6a6a6a"/><rect x="68" y="880" width="292" height="1" fill="#6a6a6a"/><rect x="68" y="890" width="292" height="1" fill="#6a6a6a"/><rect x="68" y="900" width="292" height="1" fill="#6a6a6a"/><rect x="68" y="909" width="292" height="1" fill="#6a6a6a"/><rect x="68" y="919" width="292" height="1" fill="#6a6a6a"/><rect x="68" y="929" width="292" height="1" fill="#6a6a6a"/><rect x="68" y="939" width="292" height="1" fill="#6a6a6a"/><rect x="68" y="686" width="1" height="254" fill="#b4b4b4"/><rect x="359" y="686" width="1" height="254" fill="#6a6a6a"/><rect x="84.70" y="686" width="1.2" height="254" fill="#000"/><rect x="145.84" y="686" width="1.2" height="254" fill="#000"/><rect x="226.84" y="686" width="1.2" height="254" fill="#000"/><rect x="261.84" y="686" width="1.2" height="254" fill="#000"/><rect x="320.84" y="686" width="1.2" height="254" fill="#000"/></svg>
<div class="t" style="left:70.00px;top:687.80px;font-size:5.4px;line-height:6px;color:#000;-webkit-text-stroke:0.1px #000">0</div>
<div class="t" style="left:86.20px;top:687.80px;font-size:5.4px;line-height:6px;color:#000;-webkit-text-stroke:0.1px #000">server</div>
<div class="t" style="left:147.90px;top:687.80px;font-size:5.4px;line-height:6px;color:#000;-webkit-text-stroke:0.1px #000">seconds_before_next_point</div>
<div class="t" style="left:228.90px;top:687.80px;font-size:5.4px;line-height:6px;color:#000;-webkit-text-stroke:0.1px #000">day</div>
<div class="t" style="left:263.90px;top:687.80px;font-size:5.4px;line-height:6px;color:#000;-webkit-text-stroke:0.1px #000">opponent</div>
<div class="t" style="left:323.00px;top:687.80px;font-size:5.4px;line-height:6px;color:#000;-webkit-text-stroke:0.1px #000">game_score</div>
<div class="t" style="left:70.00px;top:697.80px;font-size:5.4px;line-height:6px;color:#000;-webkit-text-stroke:0.1px #000">50</div>
<div class="t" style="left:86.20px;top:697.80px;font-size:5.4px;line-height:6px;color:#000;-webkit-text-stroke:0.1px #000">Andy Murray</div>
<div class="t" style="left:147.90px;top:697.80px;font-size:5.4px;line-height:6px;color:#000;-webkit-text-stroke:0.1px #000">30</div>
<div class="t" style="left:228.90px;top:697.80px;font-size:5.4px;line-height:6px;color:#000;-webkit-text-stroke:0.1px #000">28-May-15</div>
<div class="t" style="left:263.90px;top:697.80px;font-size:5.4px;line-height:6px;color:#000;-webkit-text-stroke:0.1px #000">Joao Sousa</div>
<div class="t" style="left:323.00px;top:697.80px;font-size:5.4px;line-height:6px;color:#000;-webkit-text-stroke:0.1px #000">30-40</div>
<div class="t" style="left:70.00px;top:707.80px;font-size:5.4px;line-height:6px;color:#000;-webkit-text-stroke:0.1px #000">51</div>
<div class="t" style="left:86.20px;top:707.80px;font-size:5.4px;line-height:6px;color:#000;-webkit-text-stroke:0.1px #000">Andy Murray</div>
<div class="t" style="left:147.90px;top:707.80px;font-size:5.4px;line-height:6px;color:#000;-webkit-text-stroke:0.1px #000">24</div>
<div class="t" style="left:228.90px;top:707.80px;font-size:5.4px;line-height:6px;color:#000;-webkit-text-stroke:0.1px #000">28-May-15</div>
<div class="t" style="left:263.90px;top:707.80px;font-size:5.4px;line-height:6px;color:#000;-webkit-text-stroke:0.1px #000">Joao Sousa</div>
<div class="t" style="left:323.00px;top:707.80px;font-size:5.4px;line-height:6px;color:#000;-webkit-text-stroke:0.1px #000">Deuce</div>
<div class="t" style="left:70.00px;top:717.80px;font-size:5.4px;line-height:6px;color:#000;-webkit-text-stroke:0.1px #000">52</div>
<div class="t" style="left:86.20px;top:717.80px;font-size:5.4px;line-height:6px;color:#000;-webkit-text-stroke:0.1px #000">Andy Murray</div>
<div class="t" style="left:147.90px;top:717.80px;font-size:5.4px;line-height:6px;color:#000;-webkit-text-stroke:0.1px #000">30</div>
<div class="t" style="left:228.90px;top:717.80px;font-size:5.4px;line-height:6px;color:#000;-webkit-text-stroke:0.1px #000">28-May-15</div>
<div class="t" style="left:263.90px;top:717.80px;font-size:5.4px;line-height:6px;color:#000;-webkit-text-stroke:0.1px #000">Joao Sousa</div>
<div class="t" style="left:323.00px;top:717.80px;font-size:5.4px;line-height:6px;color:#000;-webkit-text-stroke:0.1px #000">Ad-out</div>
<div class="t" style="left:70.00px;top:726.80px;font-size:5.4px;line-height:6px;color:#000;-webkit-text-stroke:0.1px #000">53</div>
<div class="t" style="left:86.20px;top:726.80px;font-size:5.4px;line-height:6px;color:#000;-webkit-text-stroke:0.1px #000">Andy Murray</div>
<div class="t" style="left:147.90px;top:726.80px;font-size:5.4px;line-height:6px;color:#000;-webkit-text-stroke:0.1px #000">21</div>
<div class="t" style="left:228.90px;top:726.80px;font-size:5.4px;line-height:6px;color:#000;-webkit-text-stroke:0.1px #000">28-May-15</div>
<div class="t" style="left:263.90px;top:726.80px;font-size:5.4px;line-height:6px;color:#000;-webkit-text-stroke:0.1px #000">Joao Sousa</div>
<div class="t" style="left:323.00px;top:726.80px;font-size:5.4px;line-height:6px;color:#000;-webkit-text-stroke:0.1px #000">Deuce</div>
<div class="t" style="left:70.00px;top:736.80px;font-size:5.4px;line-height:6px;color:#000;-webkit-text-stroke:0.1px #000">54</div>
<div class="t" style="left:86.20px;top:736.80px;font-size:5.4px;line-height:6px;color:#000;-webkit-text-stroke:0.1px #000">John Isner</div>
<div class="t" style="left:147.90px;top:736.80px;font-size:5.4px;line-height:6px;color:#000;-webkit-text-stroke:0.1px #000">22</div>
<div class="t" style="left:228.90px;top:736.80px;font-size:5.4px;line-height:6px;color:#000;-webkit-text-stroke:0.1px #000">28-May-15</div>
<div class="t" style="left:263.90px;top:736.80px;font-size:5.4px;line-height:6px;color:#000;-webkit-text-stroke:0.1px #000">Jeremy Chardy</div>
<div class="t" style="left:323.00px;top:736.80px;font-size:5.4px;line-height:6px;color:#000;-webkit-text-stroke:0.1px #000">40-0</div>
<div class="t" style="left:70.00px;top:746.80px;font-size:5.4px;line-height:6px;color:#000;-webkit-text-stroke:0.1px #000">55</div>
<div class="t" style="left:86.20px;top:746.80px;font-size:5.4px;line-height:6px;color:#000;-webkit-text-stroke:0.1px #000">Borna Coric</div>
<div class="t" style="left:147.90px;top:746.80px;font-size:5.4px;line-height:6px;color:#000;-webkit-text-stroke:0.1px #000">26</div>
<div class="t" style="left:228.90px;top:746.80px;font-size:5.4px;line-height:6px;color:#000;-webkit-text-stroke:0.1px #000">28-May-15</div>
<div class="t" style="left:263.90px;top:746.80px;font-size:5.4px;line-height:6px;color:#000;-webkit-text-stroke:0.1px #000">Tommy Robredo</div>
<div class="t" style="left:323.00px;top:746.80px;font-size:5.4px;line-height:6px;color:#000;-webkit-text-stroke:0.1px #000">0-30</div>
<div class="t" style="left:70.00px;top:756.80px;font-size:5.4px;line-height:6px;color:#000;-webkit-text-stroke:0.1px #000">56</div>
<div class="t" style="left:86.20px;top:756.80px;font-size:5.4px;line-height:6px;color:#000;-webkit-text-stroke:0.1px #000">Carlos Berlocq</div>
<div class="t" style="left:147.90px;top:756.80px;font-size:5.4px;line-height:6px;color:#000;-webkit-text-stroke:0.1px #000">34</div>
<div class="t" style="left:228.90px;top:756.80px;font-size:5.4px;line-height:6px;color:#000;-webkit-text-stroke:0.1px #000">28-May-15</div>
<div class="t" style="left:263.90px;top:756.80px;font-size:5.4px;line-height:6px;color:#000;-webkit-text-stroke:0.1px #000">Richard Gasquet</div>
<div class="t" style="left:323.00px;top:756.80px;font-size:5.4px;line-height:6px;color:#000;-webkit-text-stroke:0.1px #000">15-30</div>
<div class="t" style="left:70.00px;top:765.80px;font-size:5.4px;line-height:6px;color:#000;-webkit-text-stroke:0.1px #000">57</div>
<div class="t" style="left:86.20px;top:765.80px;font-size:5.4px;line-height:6px;color:#000;-webkit-text-stroke:0.1px #000">Carlos Berlocq</div>
<div class="t" style="left:147.90px;top:765.80px;font-size:5.4px;line-height:6px;color:#000;-webkit-text-stroke:0.1px #000">28</div>
<div class="t" style="left:228.90px;top:765.80px;font-size:5.4px;line-height:6px;color:#000;-webkit-text-stroke:0.1px #000">28-May-15</div>
<div class="t" style="left:263.90px;top:765.80px;font-size:5.4px;line-height:6px;color:#000;-webkit-text-stroke:0.1px #000">Richard Gasquet</div>
<div class="t" style="left:323.00px;top:765.80px;font-size:5.4px;line-height:6px;color:#000;-webkit-text-stroke:0.1px #000">15-40</div>
<div class="t" style="left:70.00px;top:775.80px;font-size:5.4px;line-height:6px;color:#000;-webkit-text-stroke:0.1px #000">58</div>
<div class="t" style="left:86.20px;top:775.80px;font-size:5.4px;line-height:6px;color:#000;-webkit-text-stroke:0.1px #000">Daniel Gimeno Traver</div>
<div class="t" style="left:147.90px;top:775.80px;font-size:5.4px;line-height:6px;color:#000;-webkit-text-stroke:0.1px #000">15</div>
<div class="t" style="left:228.90px;top:775.80px;font-size:5.4px;line-height:6px;color:#000;-webkit-text-stroke:0.1px #000">28-May-15</div>
<div class="t" style="left:263.90px;top:775.80px;font-size:5.4px;line-height:6px;color:#000;-webkit-text-stroke:0.1px #000">David Ferrer</div>
<div class="t" style="left:323.00px;top:775.80px;font-size:5.4px;line-height:6px;color:#000;-webkit-text-stroke:0.1px #000">40-0</div>
<div class="t" style="left:70.00px;top:785.80px;font-size:5.4px;line-height:6px;color:#000;-webkit-text-stroke:0.1px #000">59</div>
<div class="t" style="left:86.20px;top:785.80px;font-size:5.4px;line-height:6px;color:#000;-webkit-text-stroke:0.1px #000">Daniel Gimeno Traver</div>
<div class="t" style="left:147.90px;top:785.80px;font-size:5.4px;line-height:6px;color:#000;-webkit-text-stroke:0.1px #000">17</div>
<div class="t" style="left:228.90px;top:785.80px;font-size:5.4px;line-height:6px;color:#000;-webkit-text-stroke:0.1px #000">28-May-15</div>
<div class="t" style="left:263.90px;top:785.80px;font-size:5.4px;line-height:6px;color:#000;-webkit-text-stroke:0.1px #000">David Ferrer</div>
<div class="t" style="left:323.00px;top:785.80px;font-size:5.4px;line-height:6px;color:#000;-webkit-text-stroke:0.1px #000">0-15</div>
<div class="t" style="left:70.00px;top:794.80px;font-size:5.4px;line-height:6px;color:#000;-webkit-text-stroke:0.1px #000">60</div>
<div class="t" style="left:86.20px;top:794.80px;font-size:5.4px;line-height:6px;color:#000;-webkit-text-stroke:0.1px #000">Daniel Gimeno Traver</div>
<div class="t" style="left:147.90px;top:794.80px;font-size:5.4px;line-height:6px;color:#000;-webkit-text-stroke:0.1px #000">26</div>
<div class="t" style="left:228.90px;top:794.80px;font-size:5.4px;line-height:6px;color:#000;-webkit-text-stroke:0.1px #000">28-May-15</div>
<div class="t" style="left:263.90px;top:794.80px;font-size:5.4px;line-height:6px;color:#000;-webkit-text-stroke:0.1px #000">David Ferrer</div>
<div class="t" style="left:323.00px;top:794.80px;font-size:5.4px;line-height:6px;color:#000;-webkit-text-stroke:0.1px #000">0-30</div>
<div class="t" style="left:70.00px;top:804.80px;font-size:5.4px;line-height:6px;color:#000;-webkit-text-stroke:0.1px #000">61</div>
<div class="t" style="left:86.20px;top:804.80px;font-size:5.4px;line-height:6px;color:#000;-webkit-text-stroke:0.1px #000">Daniel Gimeno Traver</div>
<div class="t" style="left:147.90px;top:804.80px;font-size:5.4px;line-height:6px;color:#000;-webkit-text-stroke:0.1px #000">27</div>
<div class="t" style="left:228.90px;top:804.80px;font-size:5.4px;line-height:6px;color:#000;-webkit-text-stroke:0.1px #000">28-May-15</div>
<div class="t" style="left:263.90px;top:804.80px;font-size:5.4px;line-height:6px;color:#000;-webkit-text-stroke:0.1px #000">David Ferrer</div>
<div class="t" style="left:323.00px;top:804.80px;font-size:5.4px;line-height:6px;color:#000;-webkit-text-stroke:0.1px #000">15-30</div>
<div class="t" style="left:70.00px;top:814.80px;font-size:5.4px;line-height:6px;color:#000;-webkit-text-stroke:0.1px #000">62</div>
<div class="t" style="left:86.20px;top:814.80px;font-size:5.4px;line-height:6px;color:#000;-webkit-text-stroke:0.1px #000">Daniel Gimeno Traver</div>
<div class="t" style="left:147.90px;top:814.80px;font-size:5.4px;line-height:6px;color:#000;-webkit-text-stroke:0.1px #000">27</div>
<div class="t" style="left:228.90px;top:814.80px;font-size:5.4px;line-height:6px;color:#000;-webkit-text-stroke:0.1px #000">28-May-15</div>
<div class="t" style="left:263.90px;top:814.80px;font-size:5.4px;line-height:6px;color:#000;-webkit-text-stroke:0.1px #000">David Ferrer</div>
<div class="t" style="left:323.00px;top:814.80px;font-size:5.4px;line-height:6px;color:#000;-webkit-text-stroke:0.1px #000">15-40</div>
<div class="t" style="left:70.00px;top:824.80px;font-size:5.4px;line-height:6px;color:#000;-webkit-text-stroke:0.1px #000">63</div>
<div class="t" style="left:86.20px;top:824.80px;font-size:5.4px;line-height:6px;color:#000;-webkit-text-stroke:0.1px #000">Daniel Gimeno Traver</div>
<div class="t" style="left:147.90px;top:824.80px;font-size:5.4px;line-height:6px;color:#000;-webkit-text-stroke:0.1px #000">15</div>
<div class="t" style="left:228.90px;top:824.80px;font-size:5.4px;line-height:6px;color:#000;-webkit-text-stroke:0.1px #000">28-May-15</div>
<div class="t" style="left:263.90px;top:824.80px;font-size:5.4px;line-height:6px;color:#000;-webkit-text-stroke:0.1px #000">David Ferrer</div>
<div class="t" style="left:323.00px;top:824.80px;font-size:5.4px;line-height:6px;color:#000;-webkit-text-stroke:0.1px #000">30-40</div>
<div class="t" style="left:70.00px;top:833.80px;font-size:5.4px;line-height:6px;color:#000;-webkit-text-stroke:0.1px #000">64</div>
<div class="t" style="left:86.20px;top:833.80px;font-size:5.4px;line-height:6px;color:#000;-webkit-text-stroke:0.1px #000">Carlos Berlocq</div>
<div class="t" style="left:147.90px;top:833.80px;font-size:5.4px;line-height:6px;color:#000;-webkit-text-stroke:0.1px #000">20</div>
<div class="t" style="left:228.90px;top:833.80px;font-size:5.4px;line-height:6px;color:#000;-webkit-text-stroke:0.1px #000">28-May-15</div>
<div class="t" style="left:263.90px;top:833.80px;font-size:5.4px;line-height:6px;color:#000;-webkit-text-stroke:0.1px #000">Richard Gasquet</div>
<div class="t" style="left:323.00px;top:833.80px;font-size:5.4px;line-height:6px;color:#000;-webkit-text-stroke:0.1px #000">15-15</div>
<div class="t" style="left:70.00px;top:843.80px;font-size:5.4px;line-height:6px;color:#000;-webkit-text-stroke:0.1px #000">65</div>
<div class="t" style="left:86.20px;top:843.80px;font-size:5.4px;line-height:6px;color:#000;-webkit-text-stroke:0.1px #000">Carlos Berlocq</div>
<div class="t" style="left:147.90px;top:843.80px;font-size:5.4px;line-height:6px;color:#000;-webkit-text-stroke:0.1px #000">30</div>
<div class="t" style="left:228.90px;top:843.80px;font-size:5.4px;line-height:6px;color:#000;-webkit-text-stroke:0.1px #000">28-May-15</div>
<div class="t" style="left:263.90px;top:843.80px;font-size:5.4px;line-height:6px;color:#000;-webkit-text-stroke:0.1px #000">Richard Gasquet</div>
<div class="t" style="left:323.00px;top:843.80px;font-size:5.4px;line-height:6px;color:#000;-webkit-text-stroke:0.1px #000">15-30</div>
<div class="t" style="left:70.00px;top:853.80px;font-size:5.4px;line-height:6px;color:#000;-webkit-text-stroke:0.1px #000">66</div>
<div class="t" style="left:86.20px;top:853.80px;font-size:5.4px;line-height:6px;color:#000;-webkit-text-stroke:0.1px #000">Carlos Berlocq</div>
<div class="t" style="left:147.90px;top:853.80px;font-size:5.4px;line-height:6px;color:#000;-webkit-text-stroke:0.1px #000">28</div>
<div class="t" style="left:228.90px;top:853.80px;font-size:5.4px;line-height:6px;color:#000;-webkit-text-stroke:0.1px #000">28-May-15</div>
<div class="t" style="left:263.90px;top:853.80px;font-size:5.4px;line-height:6px;color:#000;-webkit-text-stroke:0.1px #000">Richard Gasquet</div>
<div class="t" style="left:323.00px;top:853.80px;font-size:5.4px;line-height:6px;color:#000;-webkit-text-stroke:0.1px #000">15-40</div>
<div class="t" style="left:70.00px;top:863.80px;font-size:5.4px;line-height:6px;color:#000;-webkit-text-stroke:0.1px #000">67</div>
<div class="t" style="left:86.20px;top:863.80px;font-size:5.4px;line-height:6px;color:#000;-webkit-text-stroke:0.1px #000">Carlos Berlocq</div>
<div class="t" style="left:147.90px;top:863.80px;font-size:5.4px;line-height:6px;color:#000;-webkit-text-stroke:0.1px #000">28</div>
<div class="t" style="left:228.90px;top:863.80px;font-size:5.4px;line-height:6px;color:#000;-webkit-text-stroke:0.1px #000">29-May-15</div>
<div class="t" style="left:263.90px;top:863.80px;font-size:5.4px;line-height:6px;color:#000;-webkit-text-stroke:0.1px #000">Richard Gasquet</div>
<div class="t" style="left:323.00px;top:863.80px;font-size:5.4px;line-height:6px;color:#000;-webkit-text-stroke:0.1px #000">30-30</div>
<div class="t" style="left:70.00px;top:872.80px;font-size:5.4px;line-height:6px;color:#000;-webkit-text-stroke:0.1px #000">68</div>
<div class="t" style="left:86.20px;top:872.80px;font-size:5.4px;line-height:6px;color:#000;-webkit-text-stroke:0.1px #000">Carlos Berlocq</div>
<div class="t" style="left:147.90px;top:872.80px;font-size:5.4px;line-height:6px;color:#000;-webkit-text-stroke:0.1px #000">31</div>
<div class="t" style="left:228.90px;top:872.80px;font-size:5.4px;line-height:6px;color:#000;-webkit-text-stroke:0.1px #000">29-May-15</div>
<div class="t" style="left:263.90px;top:872.80px;font-size:5.4px;line-height:6px;color:#000;-webkit-text-stroke:0.1px #000">Richard Gasquet</div>
<div class="t" style="left:323.00px;top:872.80px;font-size:5.4px;line-height:6px;color:#000;-webkit-text-stroke:0.1px #000">40-30</div>
<div class="t" style="left:70.00px;top:882.80px;font-size:5.4px;line-height:6px;color:#000;-webkit-text-stroke:0.1px #000">69</div>
<div class="t" style="left:86.20px;top:882.80px;font-size:5.4px;line-height:6px;color:#000;-webkit-text-stroke:0.1px #000">Lukas Rosol</div>
<div class="t" style="left:147.90px;top:882.80px;font-size:5.4px;line-height:6px;color:#000;-webkit-text-stroke:0.1px #000">15</div>
<div class="t" style="left:228.90px;top:882.80px;font-size:5.4px;line-height:6px;color:#000;-webkit-text-stroke:0.1px #000">29-May-15</div>
<div class="t" style="left:263.90px;top:882.80px;font-size:5.4px;line-height:6px;color:#000;-webkit-text-stroke:0.1px #000">Teymuraz Gabashvili</div>
<div class="t" style="left:323.00px;top:882.80px;font-size:5.4px;line-height:6px;color:#000;-webkit-text-stroke:0.1px #000">15-0</div>
<div class="t" style="left:70.00px;top:892.80px;font-size:5.4px;line-height:6px;color:#000;-webkit-text-stroke:0.1px #000">70</div>
<div class="t" style="left:86.20px;top:892.80px;font-size:5.4px;line-height:6px;color:#000;-webkit-text-stroke:0.1px #000">Lukas Rosol</div>
<div class="t" style="left:147.90px;top:892.80px;font-size:5.4px;line-height:6px;color:#000;-webkit-text-stroke:0.1px #000">16</div>
<div class="t" style="left:228.90px;top:892.80px;font-size:5.4px;line-height:6px;color:#000;-webkit-text-stroke:0.1px #000">29-May-15</div>
<div class="t" style="left:263.90px;top:892.80px;font-size:5.4px;line-height:6px;color:#000;-webkit-text-stroke:0.1px #000">Teymuraz Gabashvili</div>
<div class="t" style="left:323.00px;top:892.80px;font-size:5.4px;line-height:6px;color:#000;-webkit-text-stroke:0.1px #000">15-15</div>
<div class="t" style="left:70.00px;top:901.80px;font-size:5.4px;line-height:6px;color:#000;-webkit-text-stroke:0.1px #000">71</div>
<div class="t" style="left:86.20px;top:901.80px;font-size:5.4px;line-height:6px;color:#000;-webkit-text-stroke:0.1px #000">Lukas Rosol</div>
<div class="t" style="left:147.90px;top:901.80px;font-size:5.4px;line-height:6px;color:#000;-webkit-text-stroke:0.1px #000">15</div>
<div class="t" style="left:228.90px;top:901.80px;font-size:5.4px;line-height:6px;color:#000;-webkit-text-stroke:0.1px #000">29-May-15</div>
<div class="t" style="left:263.90px;top:901.80px;font-size:5.4px;line-height:6px;color:#000;-webkit-text-stroke:0.1px #000">Teymuraz Gabashvili</div>
<div class="t" style="left:323.00px;top:901.80px;font-size:5.4px;line-height:6px;color:#000;-webkit-text-stroke:0.1px #000">30-15</div>
<div class="t" style="left:70.00px;top:911.80px;font-size:5.4px;line-height:6px;color:#000;-webkit-text-stroke:0.1px #000">72</div>
<div class="t" style="left:86.20px;top:911.80px;font-size:5.4px;line-height:6px;color:#000;-webkit-text-stroke:0.1px #000">Lukas Rosol</div>
<div class="t" style="left:147.90px;top:911.80px;font-size:5.4px;line-height:6px;color:#000;-webkit-text-stroke:0.1px #000">22</div>
<div class="t" style="left:228.90px;top:911.80px;font-size:5.4px;line-height:6px;color:#000;-webkit-text-stroke:0.1px #000">29-May-15</div>
<div class="t" style="left:263.90px;top:911.80px;font-size:5.4px;line-height:6px;color:#000;-webkit-text-stroke:0.1px #000">Teymuraz Gabashvili</div>
<div class="t" style="left:323.00px;top:911.80px;font-size:5.4px;line-height:6px;color:#000;-webkit-text-stroke:0.1px #000">30-30</div>
<div class="t" style="left:70.00px;top:921.80px;font-size:5.4px;line-height:6px;color:#000;-webkit-text-stroke:0.1px #000">73</div>
<div class="t" style="left:86.20px;top:921.80px;font-size:5.4px;line-height:6px;color:#000;-webkit-text-stroke:0.1px #000">Lukas Rosol</div>
<div class="t" style="left:147.90px;top:921.80px;font-size:5.4px;line-height:6px;color:#000;-webkit-text-stroke:0.1px #000">19</div>
<div class="t" style="left:228.90px;top:921.80px;font-size:5.4px;line-height:6px;color:#000;-webkit-text-stroke:0.1px #000">29-May-15</div>
<div class="t" style="left:263.90px;top:921.80px;font-size:5.4px;line-height:6px;color:#000;-webkit-text-stroke:0.1px #000">Teymuraz Gabashvili</div>
<div class="t" style="left:323.00px;top:921.80px;font-size:5.4px;line-height:6px;color:#000;-webkit-text-stroke:0.1px #000">40-30</div>
<div class="t" style="left:70.00px;top:931.80px;font-size:5.4px;line-height:6px;color:#000;-webkit-text-stroke:0.1px #000">74</div>
<div class="t" style="left:86.20px;top:931.80px;font-size:5.4px;line-height:6px;color:#000;-webkit-text-stroke:0.1px #000">Lukas Rosol</div>
<div class="t" style="left:147.90px;top:931.80px;font-size:5.4px;line-height:6px;color:#000;-webkit-text-stroke:0.1px #000">20</div>
<div class="t" style="left:228.90px;top:931.80px;font-size:5.4px;line-height:6px;color:#000;-webkit-text-stroke:0.1px #000">29-May-15</div>
<div class="t" style="left:263.90px;top:931.80px;font-size:5.4px;line-height:6px;color:#000;-webkit-text-stroke:0.1px #000">Teymuraz Gabashvili</div>
<div class="t" style="left:323.00px;top:931.80px;font-size:5.4px;line-height:6px;color:#000;-webkit-text-stroke:0.1px #000">40-40</div>
<div class="t" style="left:49px;width:330px;text-align:center;top:944px;font-size:7.2px;line-height:8px;color:#111">2 / 6</div>
</div></div>
<div class="r" style="left:398px;top:48px;width:12px;height:871px;background:#18191e;border-radius:0px;"></div>
<div class="r" style="left:20px;top:919px;width:378px;height:1px;background:#141419;border-radius:0px;"></div>
<div class="r" style="left:398px;top:48px;width:12px;height:157px;background:#656886;border-radius:0px;"></div>
<div class="t" style="left:444px;top:64px;font-size:14px;line-height:14px;color:#dcdcd3;font-weight:normal;">Page Setup</div>
<div class="r" style="left:436px;top:80px;width:454px;height:245px;background:#15161b;border-radius:8px;"></div>
<div class="t" style="left:444px;top:335px;font-size:14px;line-height:14px;color:#dcdcd3;font-weight:normal;">Printer</div>
<div class="r" style="left:436px;top:351px;width:454px;height:203.5px;background:#15161b;border-radius:8px;"></div>
<div class="t" style="left:444px;top:565px;font-size:14px;line-height:14px;color:#dcdcd3;font-weight:normal;">Print Range</div>
<div class="r" style="left:436px;top:581px;width:454px;height:122px;background:#15161b;border-radius:8px;"></div>
<div class="t" style="left:444px;top:714px;font-size:14px;line-height:14px;color:#dcdcd3;font-weight:normal;">CSV Options</div>
<div class="r" style="left:436px;top:730px;width:454px;height:181px;background:#15161b;border-radius:8px;"></div>
<div class="t" style="left:454px;top:95px;font-size:14px;line-height:14px;color:#dcdcd3;font-weight:normal;">Page Size:</div>
<div class="r" style="left:538px;top:92px;width:334px;height:19px;background:#2a2b38;border-radius:3px;"></div>
<svg class="r" style="left:855px;top:97px" width="14" height="8"><path d="M0 0H14L7 8Z" fill="#a5a5aa"/></svg>
<div class="t" style="left:544px;top:95px;font-size:14px;line-height:14px;color:#f4f4f4;font-weight:normal;">Legal</div>
<div class="t" style="left:454px;top:123px;font-size:14px;line-height:14px;color:#dcdcd3;font-weight:normal;">Orientation:</div>
<div class="r" style="left:538px;top:122px;width:15px;height:15px;background:#fab265;border-radius:8px;"></div>
<div class="t" style="left:555px;top:123px;font-size:14px;line-height:14px;color:#dcdcd3;font-weight:normal;">Portrait</div>
<div class="r" style="left:620px;top:122px;width:15px;height:15px;background:#41435a;border-radius:8px;"></div>
<div class="t" style="left:637px;top:123px;font-size:14px;line-height:14px;color:#dcdcd3;font-weight:normal;">Landscape</div>
<div class="t" style="left:605px;width:200px;text-align:center;top:156px;font-size:14px;line-height:14px;color:#dcdcd3;">Top</div>
<div class="r" style="left:665px;top:173px;width:80px;height:19px;background:#2a2b38;border-radius:3px;"></div>
<svg class="r" style="left:732px;top:174px" width="12" height="18"><path d="M0 5.8L6 0.4L12 5.8Z M0 10.9H12L6 16.7Z" fill="#9d9da3"/></svg>
<div class="t" style="left:667px;top:176px;font-size:14px;line-height:14px;color:#f4f4f4;font-weight:normal;">0.50</div>
<div class="t" style="left:454px;top:207px;font-size:14px;line-height:14px;color:#dcdcd3;font-weight:normal;">Margins:</div>
<div class="t" style="left:496px;width:200px;text-align:center;top:196px;font-size:14px;line-height:14px;color:#dcdcd3;">Left</div>
<div class="r" style="left:557px;top:213px;width:80px;height:19px;background:#2a2b38;border-radius:3px;"></div>
<svg class="r" style="left:624px;top:214px" width="12" height="18"><path d="M0 5.8L6 0.4L12 5.8Z M0 10.9H12L6 16.7Z" fill="#9d9da3"/></svg>
<div class="t" style="left:559px;top:216px;font-size:14px;line-height:14px;color:#f4f4f4;font-weight:normal;">0.50</div>
<div class="t" style="left:712px;width:200px;text-align:center;top:196px;font-size:14px;line-height:14px;color:#dcdcd3;">Right</div>
<div class="r" style="left:773px;top:213px;width:80px;height:19px;background:#2a2b38;border-radius:3px;"></div>
<svg class="r" style="left:840px;top:214px" width="12" height="18"><path d="M0 5.8L6 0.4L12 5.8Z M0 10.9H12L6 16.7Z" fill="#9d9da3"/></svg>
<div class="t" style="left:775px;top:216px;font-size:14px;line-height:14px;color:#f4f4f4;font-weight:normal;">0.50</div>
<div class="t" style="left:605px;width:200px;text-align:center;top:237px;font-size:14px;line-height:14px;color:#dcdcd3;letter-spacing:0.5px">Bottom</div>
<div class="r" style="left:665px;top:254px;width:80px;height:19px;background:#2a2b38;border-radius:3px;"></div>
<svg class="r" style="left:732px;top:255px" width="12" height="18"><path d="M0 5.8L6 0.4L12 5.8Z M0 10.9H12L6 16.7Z" fill="#9d9da3"/></svg>
<div class="t" style="left:667px;top:257px;font-size:14px;line-height:14px;color:#f4f4f4;font-weight:normal;">0.50</div>
<div class="t" style="left:454px;top:292px;font-size:14px;line-height:14px;color:#dcdcd3;font-weight:normal;">Units:</div>
<div class="r" style="left:538px;top:289px;width:334px;height:19px;background:#2a2b38;border-radius:3px;"></div>
<svg class="r" style="left:855px;top:294px" width="14" height="8"><path d="M0 0H14L7 8Z" fill="#a5a5aa"/></svg>
<div class="t" style="left:544px;top:292px;font-size:14px;line-height:14px;color:#f4f4f4;font-weight:normal;">Inches</div>
<div class="t" style="left:454px;top:366px;font-size:14px;line-height:14px;color:#dcdcd3;font-weight:normal;">Name:</div>
<div class="r" style="left:554px;top:363px;width:318px;height:19px;background:#2a2b38;border-radius:3px;"></div>
<svg class="r" style="left:855px;top:368px" width="14" height="8"><path d="M0 0H14L7 8Z" fill="#a5a5aa"/></svg>
<div class="t" style="left:560px;top:366px;font-size:14px;line-height:14px;color:#f4f4f4;font-weight:normal;">Canon_G6000_series</div>
<div class="t" style="left:454px;top:394px;font-size:14px;line-height:14px;color:#dcdcd3;font-weight:normal;">Location:</div>
<div class="t" style="left:454px;top:421px;font-size:14px;line-height:14px;color:#dcdcd3;font-weight:normal;">Type:</div>
<div class="t" style="left:554px;top:421px;font-size:14px;line-height:14px;color:#dcdcd3;font-weight:normal;letter-spacing:0.15px">Canon G6000 series-AirPrint</div>
<div class="t" style="left:454px;top:453px;font-size:14px;line-height:14px;color:#dcdcd3;font-weight:normal;">Output File:</div>
<div class="r" style="left:554px;top:450px;width:278px;height:19px;background:#2a2b38;border-radius:3px;overflow:hidden"></div>
<div class="r" style="left:554px;top:450px;width:278px;height:19px;overflow:hidden"><div class="t" style="left:0px;top:3px;font-size:14px;line-height:14px;letter-spacing:0.21px;color:#9a9aa0">asets/538 data/tennis-time/serve_times.pdf</div></div>
<div class="r" style="left:842px;top:451px;width:30px;height:17px;background:#3d3e52;border-radius:3px;"></div>
<div class="t" style="left:851px;top:453px;font-size:14px;line-height:14px;color:#dcdcd3;font-weight:normal;">...</div>
<div class="t" style="left:454px;top:489px;font-size:14px;line-height:14px;color:#dcdcd3;font-weight:normal;">Copies:</div>
<div class="r" style="left:554px;top:486px;width:55px;height:19px;background:#2a2b38;border-radius:3px;"></div>
<svg class="r" style="left:596px;top:487px" width="12" height="18"><path d="M0 5.8L6 0.4L12 5.8Z M0 10.9H12L6 16.7Z" fill="#9d9da3"/></svg>
<div class="t" style="left:556px;top:489px;font-size:14px;line-height:14px;color:#f4f4f4;font-weight:normal;"></div>
<svg class="r" style="left:0;top:0" width="900" height="973"><path d="M556.4 493.8L559.9 491.8V500.9" stroke="#f4f4f4" stroke-width="1.6" fill="none" stroke-linejoin="round"/></svg>
<div class="r" style="left:639px;top:488px;width:15px;height:15px;background:#41435a;border-radius:0px;"></div>
<div class="t" style="left:656px;top:489px;font-size:14px;line-height:14px;color:#f4f4f4;font-weight:normal;">Collate</div>
<div class="r" style="left:711px;top:488px;width:15px;height:15px;background:#41435a;border-radius:0px;"></div>
<div class="t" style="left:728px;top:489px;font-size:14px;line-height:14px;color:#f4f4f4;font-weight:normal;">Reverse</div>
<div class="t" style="left:454px;top:522px;font-size:14px;line-height:14px;color:#dcdcd3;font-weight:normal;">Double-sided:</div>
<div class="r" style="left:554px;top:519px;width:318px;height:19px;background:#2a2b38;border-radius:3px;"></div>
<svg class="r" style="left:855px;top:524px" width="14" height="8"><path d="M0 0H14L7 8Z" fill="#a5a5aa"/></svg>
<div class="t" style="left:560px;top:522px;font-size:14px;line-height:14px;color:#f4f4f4;font-weight:normal;">Off</div>
<div class="r" style="left:452px;top:592px;width:15px;height:15px;background:#fab265;border-radius:8px;"></div>
<div class="t" style="left:469px;top:593px;font-size:14px;line-height:14px;color:#dcdcd3;font-weight:normal;">Print All</div>
<div class="r" style="left:452px;top:619px;width:15px;height:15px;background:#41435a;border-radius:8px;"></div>
<div class="t" style="left:469px;top:620px;font-size:14px;line-height:14px;color:#dcdcd3;font-weight:normal;">Page Range:</div>
<div class="r" style="left:559px;top:616.5px;width:313px;height:18.5px;background:#2a2b38;border-radius:3px;"></div>
<div class="t" style="left:561px;top:619px;font-size:14px;line-height:14px;color:#6d6e78;font-weight:normal;">Example: 1-3, 5, 7-9</div>
<div class="r" style="left:452px;top:646px;width:15px;height:15px;background:#41435a;border-radius:8px;"></div>
<div class="t" style="left:469px;top:647px;font-size:14px;line-height:14px;color:#dcdcd3;font-weight:normal;">Current Page</div>
<div class="t" style="left:454px;top:672px;font-size:14px;line-height:14px;color:#dcdcd3;font-weight:normal;">Selection Only:</div>
<div class="r" style="left:559px;top:671px;width:15px;height:15px;background:#41435a;border-radius:0px;"></div>
<div class="t" style="left:576px;top:672px;font-size:14px;line-height:14px;color:#f4f4f4;font-weight:normal;">Selected Rows</div>
<div class="r" style="left:679px;top:671px;width:15px;height:15px;background:#41435a;border-radius:0px;"></div>
<div class="t" style="left:696px;top:672px;font-size:14px;line-height:14px;color:#f4f4f4;font-weight:normal;">Selected Columns</div>
<div class="t" style="left:454px;top:744px;font-size:14px;line-height:14px;color:#dcdcd3;font-weight:normal;">Headers:</div>
<div class="r" style="left:547px;top:743px;width:15px;height:15px;background:#fab265;border-radius:0px;"></div>
<svg class="r" style="left:547px;top:743px" width="15" height="15"><path d="M2.8 8.3L6.8 11.6L12.4 3.7" stroke="#3b3d52" stroke-width="2.2" stroke-linecap="round" stroke-linejoin="round" fill="none"/></svg>
<div class="t" style="left:564px;top:744px;font-size:14px;line-height:14px;color:#f4f4f4;font-weight:normal;">Header Rows</div>
<div class="r" style="left:658px;top:743px;width:15px;height:15px;background:#fab265;border-radius:0px;"></div>
<svg class="r" style="left:658px;top:743px" width="15" height="15"><path d="M2.8 8.3L6.8 11.6L12.4 3.7" stroke="#3b3d52" stroke-width="2.2" stroke-linecap="round" stroke-linejoin="round" fill="none"/></svg>
<div class="t" style="left:675px;top:744px;font-size:14px;line-height:14px;color:#f4f4f4;font-weight:normal;">Header Columns</div>
<div class="t" style="left:454px;top:771px;font-size:14px;line-height:14px;color:#dcdcd3;font-weight:normal;">Labels:</div>
<div class="r" style="left:547px;top:770px;width:15px;height:15px;background:#fab265;border-radius:0px;"></div>
<svg class="r" style="left:547px;top:770px" width="15" height="15"><path d="M2.8 8.3L6.8 11.6L12.4 3.7" stroke="#3b3d52" stroke-width="2.2" stroke-linecap="round" stroke-linejoin="round" fill="none"/></svg>
<div class="t" style="left:564px;top:771px;font-size:14px;line-height:14px;color:#f4f4f4;font-weight:normal;">Row</div>
<div class="r" style="left:658px;top:770px;width:15px;height:15px;background:#41435a;border-radius:0px;"></div>
<div class="t" style="left:675px;top:771px;font-size:14px;line-height:14px;color:#f4f4f4;font-weight:normal;">Column</div>
<div class="t" style="left:454px;top:798px;font-size:14px;line-height:14px;color:#dcdcd3;font-weight:normal;">Gridlines:</div>
<div class="r" style="left:547px;top:797px;width:15px;height:15px;background:#fab265;border-radius:0px;"></div>
<svg class="r" style="left:547px;top:797px" width="15" height="15"><path d="M2.8 8.3L6.8 11.6L12.4 3.7" stroke="#3b3d52" stroke-width="2.2" stroke-linecap="round" stroke-linejoin="round" fill="none"/></svg>
<div class="t" style="left:564px;top:798px;font-size:14px;line-height:14px;color:#f4f4f4;font-weight:normal;">Row</div>
<div class="r" style="left:658px;top:797px;width:15px;height:15px;background:#fab265;border-radius:0px;"></div>
<svg class="r" style="left:658px;top:797px" width="15" height="15"><path d="M2.8 8.3L6.8 11.6L12.4 3.7" stroke="#3b3d52" stroke-width="2.2" stroke-linecap="round" stroke-linejoin="round" fill="none"/></svg>
<div class="t" style="left:675px;top:798px;font-size:14px;line-height:14px;color:#f4f4f4;font-weight:normal;">Column</div>
<div class="t" style="left:454px;top:825px;font-size:14px;line-height:14px;color:#dcdcd3;font-weight:normal;">Center:</div>
<div class="r" style="left:547px;top:824px;width:15px;height:15px;background:#41435a;border-radius:0px;"></div>
<div class="t" style="left:564px;top:825px;font-size:14px;line-height:14px;color:#f4f4f4;font-weight:normal;">Vertically</div>
<div class="r" style="left:658px;top:824px;width:15px;height:15px;background:#41435a;border-radius:0px;"></div>
<div class="t" style="left:675px;top:825px;font-size:14px;line-height:14px;color:#f4f4f4;font-weight:normal;">Horizontally</div>
<div class="t" style="left:454px;top:853px;font-size:14px;line-height:14px;color:#dcdcd3;font-weight:normal;">Page Order:</div>
<div class="r" style="left:547px;top:852px;width:15px;height:15px;background:#41435a;border-radius:8px;"></div>
<div class="t" style="left:564px;top:853px;font-size:14px;line-height:14px;color:#dcdcd3;font-weight:normal;">Row-wise</div>
<div class="r" style="left:658px;top:852px;width:15px;height:15px;background:#fab265;border-radius:8px;"></div>
<div class="t" style="left:675px;top:853px;font-size:14px;line-height:14px;color:#dcdcd3;font-weight:normal;">Column-wise</div>
<div class="t" style="left:454px;top:879px;font-size:14px;line-height:14px;color:#dcdcd3;font-weight:normal;">Misc:</div>
<div class="r" style="left:547px;top:878px;width:15px;height:15px;background:#fab265;border-radius:0px;"></div>
<svg class="r" style="left:547px;top:878px" width="15" height="15"><path d="M2.8 8.3L6.8 11.6L12.4 3.7" stroke="#3b3d52" stroke-width="2.2" stroke-linecap="round" stroke-linejoin="round" fill="none"/></svg>
<div class="t" style="left:564px;top:879px;font-size:14px;line-height:14px;color:#f4f4f4;font-weight:normal;">File Title</div>
<div class="r" style="left:658px;top:878px;width:15px;height:15px;background:#fab265;border-radius:0px;"></div>
<svg class="r" style="left:658px;top:878px" width="15" height="15"><path d="M2.8 8.3L6.8 11.6L12.4 3.7" stroke="#3b3d52" stroke-width="2.2" stroke-linecap="round" stroke-linejoin="round" fill="none"/></svg>
<div class="t" style="left:675px;top:879px;font-size:14px;line-height:14px;color:#f4f4f4;font-weight:normal;">Page Numbers</div>
<svg class="r" style="left:120px;top:925px" width="190" height="36"><g stroke="#fab265" stroke-width="1.6" fill="none"><path d="M12.5 10V26M21.5 10.5L13.5 18L21.5 25.5"/><path d="M54.6 10.5L47 18L54.6 25.5"/><path d="M135.4 10.5L142.8 18L135.4 25.5"/><path d="M177 10V26M168.7 10.5L176.5 18L168.7 25.5"/></g></svg>
<div class="r" style="left:195px;top:934px;width:14px;height:18px;background:#292a36;border-radius:4px;"></div>
<svg class="r" style="left:0;top:0" width="900" height="973"><path d="M197.3 942L200.7 939.3V948" stroke="#f4f4f4" stroke-width="1.6" fill="none"/></svg>
<div class="t" style="left:218px;top:936px;font-size:14px;line-height:14px;color:#dcdcd3;font-weight:normal;">/ 6</div>
<div class="r" style="left:744px;top:928px;width:65px;height:25px;background:#3d3e52;border-radius:4px;"></div>
<div class="t" style="left:756px;top:933px;font-size:14px;line-height:14px;color:#dcdcd3;font-weight:normal;letter-spacing:-0.5px">Cancel</div>
<div class="r" style="left:815px;top:928px;width:65px;height:25px;background:#3d3e52;border-radius:4px;"></div>
<div class="t" style="left:833.5px;top:933px;font-size:14px;line-height:14px;color:#dcdcd3;font-weight:normal;letter-spacing:-0.3px">Print</div>
</div></body></html>
